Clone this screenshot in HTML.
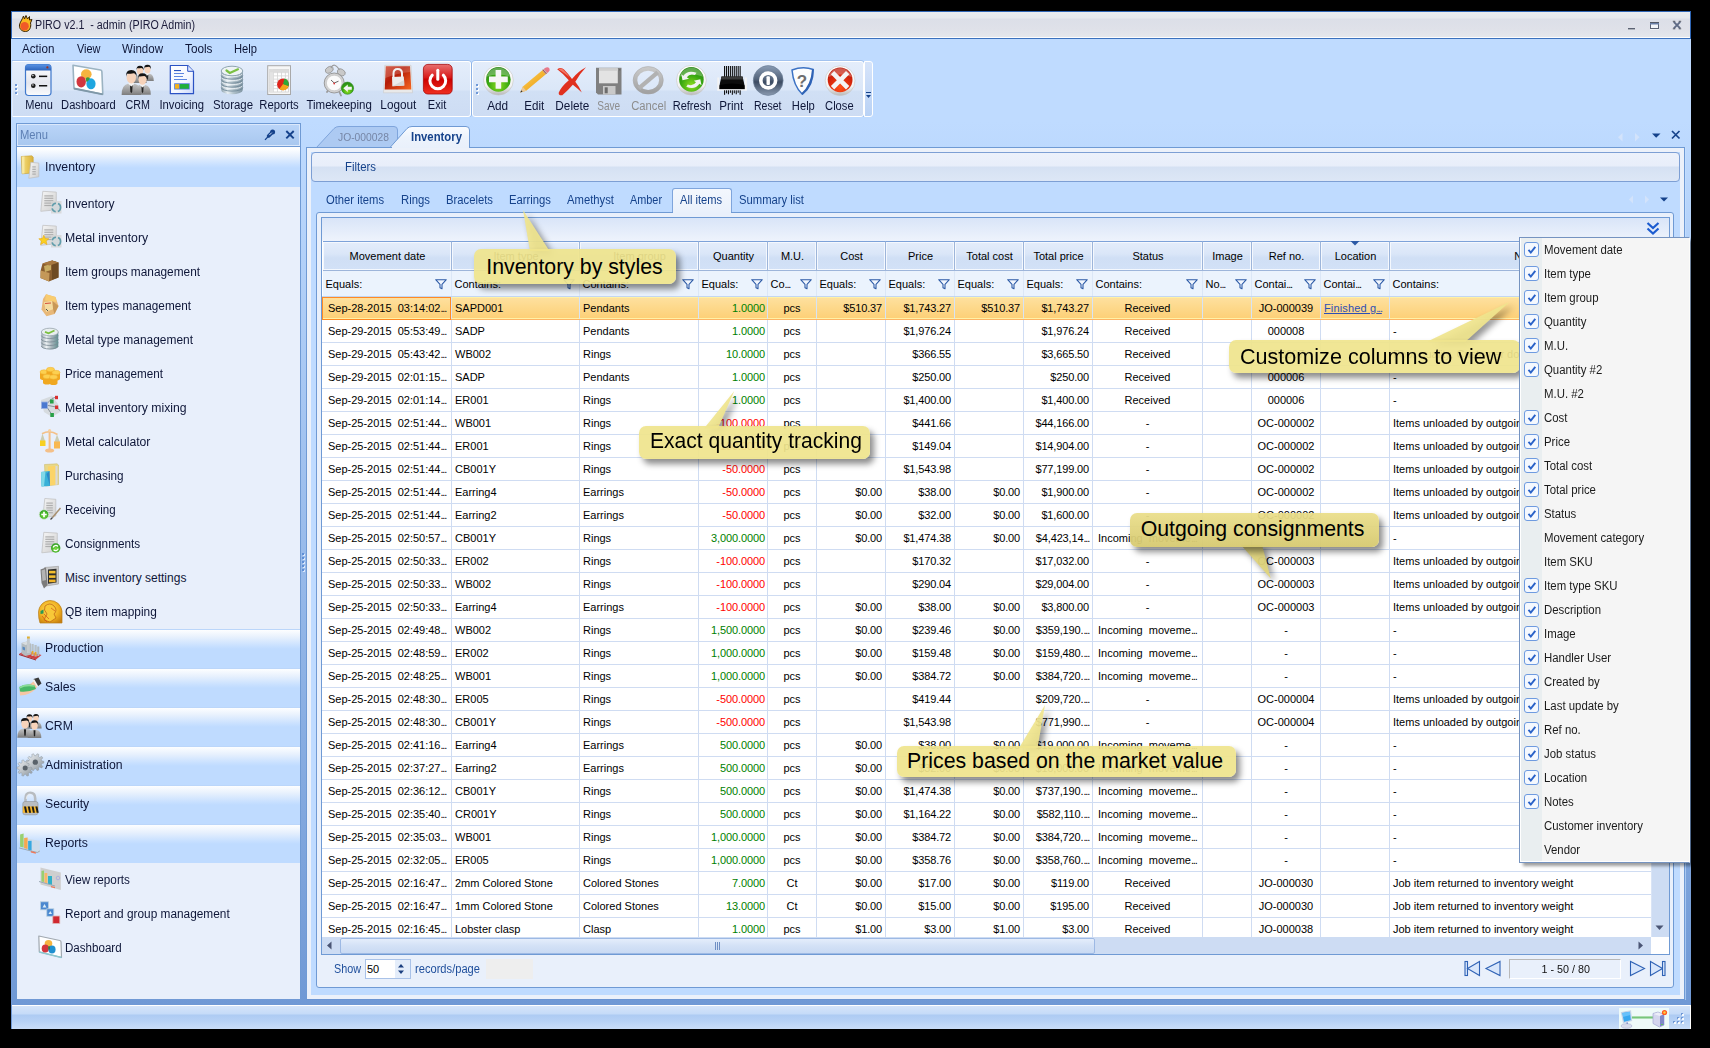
<!DOCTYPE html>
<html><head><meta charset="utf-8"><title>PIRO</title>
<style>
html,body{margin:0;padding:0;background:#000;}
body{width:1710px;height:1048px;position:relative;overflow:hidden;font-family:"Liberation Sans",sans-serif;}
.t{position:absolute;white-space:pre;}
div{box-sizing:border-box;}
svg{position:absolute;overflow:visible;}

.tb{position:absolute;border:1px solid #fff;border-radius:3px;box-shadow:0 -1px 0 #a3c2ee,1px 0 0 #8fb3e6;background:linear-gradient(#e4edfb 0px,#dbe7f8 28px,#d1e0f5 29px,#cddcf3 55px);}
.navh{position:absolute;left:17px;width:283px;height:39px;background:linear-gradient(#bbd6fa 0,#bbd6fa 1px,#fdfeff 1px,#e8f1fd 8px,#c8e0ff 17px,#bfdbff 20px,#bfdbff 39px);}
.hdr{position:absolute;top:241px;height:30px;border-top:1px solid #7da2d9;border-right:1px solid #9db5da;border-bottom:1px solid #9db5da;background:linear-gradient(#e4edfb 0,#dae6f8 12px,#d0dff5 16px,#d2e1f7 28px);box-shadow:inset 1px 1px 0 #f4f8fe,inset -1px -1px 0 #f4f8fe;}
.fc{position:absolute;top:271px;height:25px;border-right:1px solid #dbe7f7;background:#ebf3fd;}
.row{position:absolute;left:322px;width:1329px;height:23px;border-bottom:1px solid #cfdcf2;background:#fff;}
.c{position:absolute;top:0;height:22px;border-right:1px solid #cfdcf2;font-size:11px;line-height:22px;white-space:pre;overflow:hidden;color:#000;}
.g{color:#008000}.r{color:#ff0000}
.co{position:absolute;border-radius:7px;background:rgba(238,227,138,0.93);box-shadow:4px 5px 6px rgba(0,0,0,0.45);}
.cot{position:absolute;white-space:pre;font-size:21.3px;color:#000;line-height:26px;}
.pi{position:absolute;left:24px;font-size:12px;line-height:16px;color:#1b1b1b;white-space:pre;transform-origin:left center;transform:scaleX(0.95);}
.cb{position:absolute;left:4px;width:15px;height:15px;border:1px solid #6e9be0;border-radius:3px;background:#f4f8fe;}

</style></head><body>
<div class="" style="position:absolute;left:11px;top:11px;width:1680px;height:1018px;background:linear-gradient(#bfdbff 0px,#bfdbff 110px,#7099d5 994px,#7099d5 1018px);"></div>
<div class="" style="position:absolute;left:11px;top:11px;width:1680px;height:28px;background:linear-gradient(#2f66b5 0,#2f66b5 1px,#e9edf1 1px,#e6eaee 7px,#dcdfe8 8px,#dfe1e9 18px,#e5e7ec 26px,#fdfdfe 26px,#fdfdfe 27px,#3c72be 27px);border-left:1px solid #2f66b5;border-right:1px solid #2f66b5;"></div>
<span class="t " style="left:35.40px;top:16.84px;font-size:12px;line-height:16px;color:#1b1b3a;transform:scaleX(0.8920);transform-origin:left center;">PIRO v2.1  - admin (PIRO Admin)</span>
<svg style="left:18px;top:15px" width="16" height="18" viewBox="0 0 16 18"><path d="M5.5 1 L6.5 4 L8 0.5 L9.5 4 L11.5 1.5 L11.5 5 L14 4.5 L12.5 8 C13.5 12 11.5 16.5 7.5 16.5 C3.5 16.5 1 13.5 1.5 10 C2 7 4 5 5.5 1Z" fill="#f8b820" stroke="#3a2400" stroke-width="1"/><circle cx="6.6" cy="11.2" r="4.2" fill="#f05a28"/></svg>
<svg style="left:1620px;top:14px" width="70" height="22" viewBox="0 0 70 22"><rect x="8" y="15" width="7" height="1" fill="#fff"/><rect x="8" y="14" width="7" height="1.500" fill="#5b6273"/><rect x="30" y="14.500" width="9" height="1" fill="#fff"/><rect x="30.500" y="8.500" width="8" height="6" fill="#f4f6fa" stroke="#5b6273"/><rect x="30" y="8" width="9" height="2.500" fill="#6a7fa6"/><rect x="30" y="8" width="9" height="1" fill="#555a66"/><path d="M53.800 7.800 L60.200 14.400 M60.200 7.800 L53.800 14.400" stroke="#5f6b86" stroke-width="1.900"/><path d="M52.800 7.300 L55.300 7.300 M58.700 7.300 L61.200 7.300 M52.800 14.800 L55.300 14.800 M58.700 14.800 L61.200 14.800" stroke="#555a66" stroke-width="1"/></svg>
<div class="" style="position:absolute;left:12px;top:39px;width:1678px;height:21px;background:#bfdbff;"></div>
<span class="t " style="left:22.00px;top:40.84px;font-size:12px;line-height:16px;color:#0e1638;transform:scaleX(0.9715);transform-origin:left center;">Action</span>
<span class="t " style="left:76.50px;top:40.84px;font-size:12px;line-height:16px;color:#0e1638;transform:scaleX(0.9111);transform-origin:left center;">View</span>
<span class="t " style="left:122.00px;top:40.84px;font-size:12px;line-height:16px;color:#0e1638;transform:scaleX(0.9607);transform-origin:left center;">Window</span>
<span class="t " style="left:185.00px;top:40.84px;font-size:12px;line-height:16px;color:#0e1638;transform:scaleX(0.9817);transform-origin:left center;">Tools</span>
<span class="t " style="left:234.30px;top:40.84px;font-size:12px;line-height:16px;color:#0e1638;transform:scaleX(0.9320);transform-origin:left center;">Help</span>
<div class="tb" style="left:12px;top:61px;width:459px;height:56px;border-radius:0 3px 3px 0;border-left-color:#e0eafa"></div>
<div class="tb" style="left:472px;top:61px;width:392px;height:56px"></div>
<div style="position:absolute;left:864px;top:61px;width:9px;height:56px;border:1px solid #fff;border-radius:0 3px 3px 0;background:linear-gradient(#d6e4fa,#b9d2f5)"></div>
<svg style="left:865px;top:92px" width="8" height="8" viewBox="0 0 8 8"><rect x="1" y="0" width="5" height="1" fill="#15428b"/><path d="M1 3 L6 3 L3.500 6 Z" fill="#15428b"/></svg>
<svg style="left:12px;top:61px" width="861" height="56" viewBox="12 61 861 56"><defs>
<linearGradient id="gBlueT" x1="0" y1="0" x2="0" y2="1"><stop offset="0" stop-color="#5a93e4"/><stop offset="1" stop-color="#2b63bb"/></linearGradient>
<linearGradient id="gWin" x1="0" y1="0" x2="0" y2="1"><stop offset="0" stop-color="#ffffff"/><stop offset="0.6" stop-color="#e4e6ee"/><stop offset="1" stop-color="#fafbfd"/></linearGradient>
<radialGradient id="gGreen" cx="0.5" cy="0.75" r="0.7"><stop offset="0" stop-color="#8edc20"/><stop offset="0.6" stop-color="#3aa812"/><stop offset="1" stop-color="#2a8a14"/></radialGradient>
<radialGradient id="gRed" cx="0.5" cy="0.8" r="0.75"><stop offset="0" stop-color="#ff5018"/><stop offset="0.6" stop-color="#d8280c"/><stop offset="1" stop-color="#b81808"/></radialGradient>
<linearGradient id="gRim" x1="0" y1="0" x2="0" y2="1"><stop offset="0" stop-color="#ffffff"/><stop offset="0.7" stop-color="#f2f2f2"/><stop offset="1" stop-color="#b8b8b8"/></linearGradient>
<linearGradient id="gSilver" x1="0" y1="0" x2="1" y2="0"><stop offset="0" stop-color="#8ea2ae"/><stop offset="0.3" stop-color="#e8eff3"/><stop offset="0.55" stop-color="#b4c4cd"/><stop offset="1" stop-color="#7e94a2"/></linearGradient>
<linearGradient id="gExit" x1="0" y1="0" x2="0" y2="1"><stop offset="0" stop-color="#e87070"/><stop offset="0.45" stop-color="#d81818"/><stop offset="0.5" stop-color="#cc0000"/><stop offset="1" stop-color="#f03020"/></linearGradient>
<linearGradient id="gLock" x1="0" y1="0" x2="1" y2="1"><stop offset="0" stop-color="#d04028"/><stop offset="0.4" stop-color="#b41c08"/><stop offset="1" stop-color="#f86820"/></linearGradient>
<linearGradient id="gReset" x1="0" y1="0" x2="0" y2="1"><stop offset="0" stop-color="#8a9cb4"/><stop offset="0.45" stop-color="#55657c"/><stop offset="0.55" stop-color="#3c4b62"/><stop offset="1" stop-color="#8a9ab0"/></linearGradient>
<linearGradient id="gDoc" x1="0" y1="0" x2="1" y2="1"><stop offset="0" stop-color="#ffffff"/><stop offset="0.6" stop-color="#f4f7ff"/><stop offset="1" stop-color="#c8d6fa"/></linearGradient>
<linearGradient id="gSuit" x1="0" y1="0" x2="0" y2="1"><stop offset="0" stop-color="#c4c4c4"/><stop offset="1" stop-color="#7c7c7c"/></linearGradient>
<linearGradient id="gGrey" x1="0" y1="0" x2="0" y2="1"><stop offset="0" stop-color="#c8c8c8"/><stop offset="1" stop-color="#a2a2a2"/></linearGradient>
<linearGradient id="gPencil" x1="0" y1="0" x2="1" y2="1"><stop offset="0" stop-color="#ffd45a"/><stop offset="1" stop-color="#e8960c"/></linearGradient>
</defs><rect x="25.500" y="64.500" width="25.500" height="31" rx="3.200" fill="url(#gWin)" stroke="#3f78cc" stroke-width="1.200"/><path d="M25.500 70.500 L25.500 67.700 Q25.500 64.500 28.700 64.500 L47.800 64.500 Q51 64.500 51 67.700 L51 70.500 Z" fill="url(#gBlueT)"/><circle cx="47.400" cy="67.400" r="1.100" fill="#a03020"/><circle cx="33.300" cy="76.300" r="2.300" fill="#1a1a1a"/><circle cx="33.300" cy="85.700" r="2.300" fill="#1a1a1a"/><circle cx="32.900" cy="75.600" r="0.800" fill="#ddd"/><circle cx="32.900" cy="85" r="0.800" fill="#ddd"/><rect x="39" y="75.600" width="8.200" height="1.500" fill="#111"/><rect x="39" y="85" width="8.200" height="1.500" fill="#111"/><path d="M73 65.200 L100.500 70 Q101.800 70.300 101.900 71.800 L102.800 94.300 L74 88.500 Z" fill="#fff" stroke="#9bb3c2" stroke-width="1.600" stroke-linejoin="round"/><path d="M74 88.500 L102.800 94.300" stroke="#7f98a8" stroke-width="1.800"/><ellipse cx="86.300" cy="74.300" rx="5.300" ry="5" fill="#f6b440"/><ellipse cx="81.200" cy="81.800" rx="4.700" ry="5.600" fill="#d2363e"/><ellipse cx="91" cy="83.800" rx="4.600" ry="5.500" fill="#1ea6e0"/><path d="M86 78 Q88 76.500 90 78.500 Q88.500 81 86.500 82 Q85.500 80 86 78Z" fill="#3b9a40"/><g transform="translate(140,65.8) scale(0.78)"><path d="M-8.500 22 Q-8.500 13 -3 12 L3 12 Q8.500 13 8.500 22 Z" fill="url(#gSuit)"/><path d="M-1.200 12.500 L1.200 12.500 L0.800 19 L0 20.500 L-0.800 19Z" fill="#222"/><path d="M-2.800 12 L0 14.500 L2.800 12 L1.500 11 L-1.500 11Z" fill="#f2f2f2"/><ellipse cx="0" cy="6.500" rx="4.100" ry="5.300" fill="#f7d3ba"/><path d="M-4.500 6 Q-5.200 0 0 0 Q5.200 0 4.600 6 Q4 3 2 2.800 Q-2 3.500 -3.800 3.200 Q-4.300 4.500 -4.500 6Z" fill="#141414"/></g><g transform="translate(147.5,64.8) scale(0.74)"><path d="M-8.500 22 Q-8.500 13 -3 12 L3 12 Q8.500 13 8.500 22 Z" fill="url(#gSuit)"/><path d="M-1.200 12.500 L1.200 12.500 L0.800 19 L0 20.500 L-0.800 19Z" fill="#222"/><path d="M-2.800 12 L0 14.500 L2.800 12 L1.500 11 L-1.500 11Z" fill="#f2f2f2"/><ellipse cx="0" cy="6.500" rx="4.100" ry="5.300" fill="#f7d3ba"/><path d="M-4.500 6 Q-5.200 0 0 0 Q5.200 0 4.600 6 Q4 3 2 2.800 Q-2 3.500 -3.800 3.200 Q-4.300 4.500 -4.500 6Z" fill="#141414"/></g><g transform="translate(131.3,70) scale(1.14)"><path d="M-8.500 22 Q-8.500 13 -3 12 L3 12 Q8.500 13 8.500 22 Z" fill="url(#gSuit)"/><path d="M-1.200 12.500 L1.200 12.500 L0.800 19 L0 20.500 L-0.800 19Z" fill="#222"/><path d="M-2.800 12 L0 14.500 L2.800 12 L1.500 11 L-1.500 11Z" fill="#f2f2f2"/><ellipse cx="0" cy="6.500" rx="4.100" ry="5.300" fill="#f7d3ba"/><path d="M-4.500 6 Q-5.200 0 0 0 Q5.200 0 4.600 6 Q4 3 2 2.800 Q-2 3.500 -3.800 3.200 Q-4.300 4.500 -4.500 6Z" fill="#141414"/></g><g transform="translate(142.5,73.2) scale(0.98)"><path d="M-8.500 22 Q-8.500 13 -3 12 L3 12 Q8.500 13 8.500 22 Z" fill="url(#gSuit)"/><path d="M-1.200 12.500 L1.200 12.500 L0.800 19 L0 20.500 L-0.800 19Z" fill="#222"/><path d="M-2.800 12 L0 14.500 L2.800 12 L1.500 11 L-1.500 11Z" fill="#f2f2f2"/><ellipse cx="0" cy="6.500" rx="4.100" ry="5.300" fill="#f7d3ba"/><path d="M-4.500 6 Q-5.200 0 0 0 Q5.200 0 4.600 6 Q4 3 2 2.800 Q-2 3.500 -3.800 3.200 Q-4.300 4.500 -4.500 6Z" fill="#141414"/></g><path d="M170.300 65.500 L187.700 65.500 L193.500 71.300 L193.500 93.700 L170.300 93.700 Z" fill="url(#gDoc)" stroke="#2b52c4" stroke-width="1.200" stroke-linejoin="round"/><path d="M187.700 65.500 L187.700 71.300 L193.500 71.300" fill="#dfe8ff" stroke="#2b52c4" stroke-width="1"/><rect x="174" y="70" width="7" height="1.100" fill="#2c55c0"/><rect x="174" y="73" width="10" height="1" fill="#5e86e0"/><rect x="174" y="76" width="9" height="1" fill="#5e86e0"/><rect x="174" y="79" width="13" height="1" fill="#5e86e0"/><rect x="174.200" y="83.300" width="15.500" height="6.200" fill="#4a78d8"/><rect x="175" y="84.100" width="4.200" height="4.600" fill="#f6b21c"/><rect x="180" y="84.100" width="8.900" height="4.600" fill="#1fb038"/><path d="M221.200 71 L221.200 90 A10.800 4.300 0 0 0 242.800 90 L242.800 71 Z" fill="url(#gSilver)"/><path d="M221.200 75.5 A10.800 3.600 0 0 0 242.800 75.5" fill="none" stroke="#6f8796" stroke-width="1" opacity="0.850"/><path d="M222 74.3 A10.500 3.400 0 0 0 242 74.3" fill="none" stroke="#f4f8fa" stroke-width="0.900" opacity="0.900"/><path d="M221.200 79.5 A10.800 3.600 0 0 0 242.800 79.5" fill="none" stroke="#6f8796" stroke-width="1" opacity="0.850"/><path d="M222 78.3 A10.500 3.400 0 0 0 242 78.3" fill="none" stroke="#f4f8fa" stroke-width="0.900" opacity="0.900"/><path d="M221.200 83.5 A10.800 3.600 0 0 0 242.800 83.5" fill="none" stroke="#6f8796" stroke-width="1" opacity="0.850"/><path d="M222 82.3 A10.500 3.400 0 0 0 242 82.3" fill="none" stroke="#f4f8fa" stroke-width="0.900" opacity="0.900"/><path d="M221.200 87.5 A10.800 3.600 0 0 0 242.800 87.5" fill="none" stroke="#6f8796" stroke-width="1" opacity="0.850"/><path d="M222 86.3 A10.500 3.400 0 0 0 242 86.3" fill="none" stroke="#f4f8fa" stroke-width="0.900" opacity="0.900"/><ellipse cx="232" cy="71" rx="10.800" ry="4.800" fill="#eef3f5" stroke="#8fa5b1" stroke-width="1"/><path d="M226.500 70.500 L229.800 73 L238 69.300" fill="none" stroke="#7bc043" stroke-width="2.200" stroke-linecap="round"/><rect x="267.700" y="65.700" width="22.800" height="28.800" fill="#f6f6f6" stroke="#a9a9a9" stroke-width="1"/><rect x="269.700" y="69.500" width="18.800" height="22.500" fill="#fff" stroke="#cfcfcf" stroke-width="0.800"/><rect x="269.700" y="72.3" width="18.800" height="0.800" fill="#d4d4d4"/><rect x="269.700" y="75.5" width="18.800" height="0.800" fill="#d4d4d4"/><rect x="269.700" y="78.7" width="18.800" height="0.800" fill="#d4d4d4"/><rect x="269.700" y="81.9" width="18.800" height="0.800" fill="#d4d4d4"/><rect x="269.700" y="85.1" width="18.800" height="0.800" fill="#d4d4d4"/><rect x="269.700" y="88.3" width="18.800" height="0.800" fill="#d4d4d4"/><rect x="273.2" y="69.500" width="0.800" height="22.500" fill="#d4d4d4"/><rect x="277.1" y="69.500" width="0.800" height="22.500" fill="#d4d4d4"/><rect x="281.0" y="69.500" width="0.800" height="22.500" fill="#d4d4d4"/><rect x="284.9" y="69.500" width="0.800" height="22.500" fill="#d4d4d4"/><rect x="269.700" y="69.500" width="3.700" height="22.500" fill="#e4e4e4"/><rect x="269.700" y="69.500" width="18.800" height="2.700" fill="#dcdcdc"/><circle cx="283" cy="84.300" r="5.900" fill="#e0241a"/><path d="M283 84.300 L284.500 78.600 A5.900 5.900 0 0 1 288.500 86.300 Z" fill="#2ea83a"/><path d="M283 84.300 L288.500 86.300 A5.900 5.900 0 0 1 279.500 89 Z" fill="#f6c020"/><path d="M283 84.300 L279.500 89 A5.900 5.900 0 0 0 288 87.500Z" fill="#f08a18" opacity="0.500"/><ellipse cx="329.300" cy="69.800" rx="4.200" ry="3" transform="rotate(-30 329.300 69.800)" fill="#c9c9c9" stroke="#8d8d8d" stroke-width="0.700"/><ellipse cx="341.300" cy="72.300" rx="4.200" ry="3" transform="rotate(30 341.300 72.300)" fill="#c9c9c9" stroke="#8d8d8d" stroke-width="0.700"/><path d="M331 68 Q334 61.500 339.500 70" fill="none" stroke="#9c9c9c" stroke-width="1.200"/><path d="M327 92 L329.500 88 M341 95.500 L339 91" stroke="#9a9a9a" stroke-width="1.800" stroke-linecap="round"/><circle cx="334.200" cy="83" r="10" fill="#d2d2d2" stroke="#9a9a9a" stroke-width="1"/><circle cx="334.200" cy="83" r="7.800" fill="#fbfbfb" stroke="#bdbdbd" stroke-width="0.600"/><path d="M334.200 83 L331 80 M334.200 83 L338.500 81.200" stroke="#555" stroke-width="0.900"/><circle cx="334.200" cy="83.500" r="0.900" fill="#d33"/><circle cx="347.500" cy="88.200" r="6.100" fill="url(#gGreen)" stroke="#2c8a18" stroke-width="0.600"/><path d="M343.300 88.200 L347.800 84.500 L347.800 86.700 L351.800 86.700 L351.800 89.800 L347.800 89.800 L347.800 91.900Z" fill="#f4f4f4"/><path d="M384.800 65.300 L411 65.300 L412.600 92.800 L383.500 92.800 Z" fill="#e9e9e9" stroke="#c9c9c9" stroke-width="0.600"/><path d="M385.800 66.200 L410 66.200 L411.300 89.500 L384.700 89.500 Z" fill="url(#gLock)"/><path d="M385.800 66.200 L410 66.200 L410.300 72 Q398 73 385.300 78Z" fill="#fff" opacity="0.180"/><path d="M393.500 77 L393.500 73.500 Q393.500 69 397.700 69 Q402 69 402 73.500 L402 77" fill="none" stroke="#f1f1f1" stroke-width="2"/><path d="M392 77 L403.800 76.500 L404.300 85.500 L392.300 86.200Z" fill="#ececec"/><path d="M392.300 86.200 L404.300 85.500 L404.100 80 Z" fill="#d8d8d8"/><rect x="423.400" y="64.400" width="28.800" height="29.600" rx="4.500" fill="url(#gExit)" stroke="#a80808" stroke-width="0.800"/><path d="M432.300 75.200 A7.900 7.900 0 1 0 443.300 75.200" fill="none" stroke="#fff" stroke-width="3" stroke-linecap="round"/><path d="M437.800 70.200 L437.800 79.200" stroke="#fff" stroke-width="3" stroke-linecap="round"/><circle cx="498.400" cy="80.200" r="14.900" fill="url(#gRim)" stroke="#c4c4c4" stroke-width="0.600"/><circle cx="498.400" cy="79.400" r="12.300" fill="url(#gGreen)"/><path d="M486.500 76.800 A12.300 12.300 0 0 1 510.300 76.800 Q498.400 72 486.500 76.800Z" fill="#fff" opacity="0.280"/><path d="M495.600 70 L501.200 70 L501.200 76.600 L507.800 76.600 L507.800 82.200 L501.200 82.200 L501.200 88.800 L495.600 88.800 L495.600 82.200 L489 82.200 L489 76.600 L495.600 76.600Z" fill="#f6f6f6"/><path d="M520.300 92.500 L522.700 86.800 L543.500 69.200 L547 73.200 L526.200 90.800 Z" fill="url(#gPencil)"/><path d="M520.300 92.500 L522.700 86.800 L526.200 90.800Z" fill="#e8c79a"/><path d="M520.300 92.500 L521.300 90.200 L522.600 91.700Z" fill="#333"/><path d="M543.500 69.200 L545 67.900 Q547.800 66.300 549.300 68.200 Q550.600 70.200 548.500 71.900 L547 73.200Z" fill="#e8788a"/><path d="M542.200 70.300 L543.800 68.900 L547.300 72.900 L545.700 74.300Z" fill="#b9b9b9"/><path d="M542.800 69.800 L546.300 73.800" stroke="#a82030" stroke-width="0.800"/><path d="M557.200 69.300 Q561 66.500 564 69.500 Q568.500 74 572 79 Q578 71.500 586 67.300 Q580 73.500 575.300 81.800 Q579.800 87.500 581.800 92.500 Q577 88 572.800 84.800 Q568 90.500 562.300 95.300 Q558.500 95.800 558.700 92.800 Q561 87 568.800 80.300 Q563 73.500 557.200 69.300Z" fill="#e0301e"/><path d="M558.500 69.300 Q561 67.500 563.500 70 Q567 73.500 570 77.500 Q565 73.500 558.500 69.300Z" fill="#f58a78" opacity="0.800"/><path d="M596 67.800 L621.500 67.800 L621.500 94.500 L598 94.500 L596 92.500 Z" fill="#808080"/><rect x="599" y="68.300" width="18.800" height="15" fill="#e3e3e3"/><rect x="599" y="68.300" width="18.800" height="2.500" fill="#cfcfcf"/><rect x="603" y="86" width="12.500" height="8.500" fill="#c9c9c9"/><rect x="604.700" y="87.300" width="3" height="6" fill="#6c6c6c"/><rect x="619" y="69" width="1.500" height="1.500" fill="#6a6a6a"/><ellipse cx="648.200" cy="80.300" rx="13" ry="11.700" fill="none" stroke="url(#gGrey)" stroke-width="4.200"/><path d="M638.800 88.300 L657.700 72.300" stroke="#b2b2b2" stroke-width="4.200"/><ellipse cx="648.200" cy="80.300" rx="15.100" ry="13.800" fill="none" stroke="#a4a4a4" stroke-width="0.500"/><circle cx="691.400" cy="80.200" r="14.900" fill="url(#gRim)" stroke="#c4c4c4" stroke-width="0.600"/><circle cx="691.400" cy="79.400" r="12.300" fill="url(#gGreen)"/><path d="M679.500 76.800 A12.300 12.300 0 0 1 703.300 76.800 Q691.400 72 679.500 76.800Z" fill="#fff" opacity="0.250"/><path d="M683.300 75.800 Q688 69.500 696.500 72.800 L695 75 Q689.500 73.300 686.800 77.300 L689 78.800 L682.500 80.300 L681.300 74.300 Z" fill="#f2f2f2"/><path d="M699.500 83.800 Q694.800 90.300 686.300 86.800 L687.800 84.600 Q693.300 86.500 696 82.300 L693.800 80.800 L700.300 79.300 L701.500 85.300 Z" fill="#f2f2f2"/><rect x="724.00" y="66" width="1.100" height="11" fill="#111"/><rect x="725.95" y="66" width="1.100" height="11" fill="#111"/><rect x="727.90" y="66" width="1.100" height="11" fill="#111"/><rect x="729.85" y="66" width="1.100" height="11" fill="#111"/><rect x="731.80" y="66" width="1.100" height="11" fill="#111"/><rect x="733.75" y="66" width="1.100" height="11" fill="#111"/><rect x="735.70" y="66" width="1.100" height="11" fill="#111"/><rect x="737.65" y="66" width="1.100" height="11" fill="#111"/><rect x="739.60" y="66" width="1.100" height="11" fill="#111"/><path d="M721.500 76.500 L742.500 76.500 L745.500 89.300 L718.500 89.300 Z" fill="#0c0c0c"/><path d="M721.500 76.500 L742.500 76.500 L743.200 79.500 L720.800 79.500Z" fill="#3a3a3a"/><path d="M719.500 85 Q732 82 744.500 85 L745.500 89.300 L718.500 89.300Z" fill="#000"/><rect x="717.300" y="77.500" width="2" height="12.800" fill="#f3f3f3"/><rect x="744.800" y="77.500" width="2" height="12.800" fill="#f3f3f3"/><rect x="717.300" y="89.300" width="29.500" height="1.300" fill="#f6f6f6"/><rect x="724.00" y="90.300" width="1.100" height="4.5" fill="#111"/><rect x="725.95" y="90.300" width="1.100" height="3" fill="#111"/><rect x="727.90" y="90.300" width="1.100" height="4" fill="#111"/><rect x="729.85" y="90.300" width="1.100" height="2.5" fill="#111"/><rect x="731.80" y="90.300" width="1.100" height="4.5" fill="#111"/><rect x="733.75" y="90.300" width="1.100" height="3" fill="#111"/><rect x="735.70" y="90.300" width="1.100" height="4" fill="#111"/><rect x="737.65" y="90.300" width="1.100" height="2.5" fill="#111"/><rect x="739.60" y="90.300" width="1.100" height="4.5" fill="#111"/><circle cx="768.200" cy="80.500" r="14.900" fill="url(#gReset)" stroke="#6d7f98" stroke-width="0.700"/><circle cx="768.200" cy="80.500" r="7.400" fill="none" stroke="#fff" stroke-width="3.600"/><rect x="766.500" y="76.300" width="3.400" height="8.600" rx="1" fill="#fff"/><path d="M792 70 Q803 65.800 813.300 69.500 Q813.300 86 802.300 94.300 Q793.500 86 792 70Z" fill="#fdfdfd" stroke="#3c72c4" stroke-width="1.500" stroke-linejoin="round"/><path d="M812 69.200 L813.500 69.700 Q813.800 86 802.500 94.600 L801.200 93.500 Q811 85 812 69.200Z" fill="#2f62b4"/><text x="802" y="87" font-family="Liberation Sans" font-weight="bold" font-size="17" text-anchor="middle" fill="#6e6e6e">?</text><circle cx="840.100" cy="80.700" r="14.900" fill="url(#gRim)" stroke="#c4c4c4" stroke-width="0.600"/><circle cx="840.100" cy="79.800" r="12.400" fill="url(#gRed)"/><path d="M828.200 77 A12.400 12.400 0 0 1 852 77 Q840.100 72 828.200 77Z" fill="#fff" opacity="0.280"/><path d="M834.200 71 L840.100 76.900 L846 71 L849.300 74.300 L843.400 80.200 L849.300 86.100 L846 89.400 L840.100 83.500 L834.200 89.400 L830.900 86.100 L836.800 80.200 L830.900 74.300Z" fill="#f4f4f4"/></svg>
<div class="" style="position:absolute;left:15px;top:84px;width:2px;height:2px;background:#6f98d6;box-shadow:1px 1px 0 #fff;"></div>
<div class="" style="position:absolute;left:15px;top:88px;width:2px;height:2px;background:#6f98d6;box-shadow:1px 1px 0 #fff;"></div>
<div class="" style="position:absolute;left:15px;top:92px;width:2px;height:2px;background:#6f98d6;box-shadow:1px 1px 0 #fff;"></div>
<div class="" style="position:absolute;left:476px;top:84px;width:2px;height:2px;background:#6f98d6;box-shadow:1px 1px 0 #fff;"></div>
<div class="" style="position:absolute;left:476px;top:88px;width:2px;height:2px;background:#6f98d6;box-shadow:1px 1px 0 #fff;"></div>
<div class="" style="position:absolute;left:476px;top:92px;width:2px;height:2px;background:#6f98d6;box-shadow:1px 1px 0 #fff;"></div>
<span class="t " style="left:23.89px;top:97.44px;font-size:12px;line-height:16px;color:#0e1638;transform:scaleX(0.9162);transform-origin:center center;">Menu</span>
<span class="t " style="left:59.05px;top:97.44px;font-size:12px;line-height:16px;color:#0e1638;transform:scaleX(0.9284);transform-origin:center center;">Dashboard</span>
<span class="t " style="left:123.74px;top:97.44px;font-size:12px;line-height:16px;color:#0e1638;transform:scaleX(0.8965);transform-origin:center center;">CRM</span>
<span class="t " style="left:158.32px;top:97.44px;font-size:12px;line-height:16px;color:#0e1638;transform:scaleX(0.9396);transform-origin:center center;">Invoicing</span>
<span class="t " style="left:211.59px;top:97.44px;font-size:12px;line-height:16px;color:#0e1638;transform:scaleX(0.9518);transform-origin:center center;">Storage</span>
<span class="t " style="left:258.49px;top:97.44px;font-size:12px;line-height:16px;color:#0e1638;transform:scaleX(0.9401);transform-origin:center center;">Reports</span>
<span class="t " style="left:305.37px;top:97.44px;font-size:12px;line-height:16px;color:#0e1638;transform:scaleX(0.9597);transform-origin:center center;">Timekeeping</span>
<span class="t " style="left:379.55px;top:97.44px;font-size:12px;line-height:16px;color:#0e1638;transform:scaleX(0.9809);transform-origin:center center;">Logout</span>
<span class="t " style="left:427.40px;top:97.44px;font-size:12px;line-height:16px;color:#0e1638;transform:scaleX(0.9248);transform-origin:center center;">Exit</span>
<span class="t " style="left:487.22px;top:98.44px;font-size:12px;line-height:16px;color:#0e1638;transform:scaleX(0.9836);transform-origin:center center;">Add</span>
<span class="t " style="left:523.86px;top:98.44px;font-size:12px;line-height:16px;color:#0e1638;transform:scaleX(0.9672);transform-origin:center center;">Edit</span>
<span class="t " style="left:554.76px;top:98.44px;font-size:12px;line-height:16px;color:#0e1638;transform:scaleX(0.9802);transform-origin:center center;">Delete</span>
<span class="t " style="left:595.22px;top:98.44px;font-size:12px;line-height:16px;color:#8d8d8d;transform:scaleX(0.8409);transform-origin:center center;">Save</span>
<span class="t " style="left:629.72px;top:98.44px;font-size:12px;line-height:16px;color:#8d8d8d;transform:scaleX(0.9370);transform-origin:center center;">Cancel</span>
<span class="t " style="left:670.59px;top:98.44px;font-size:12px;line-height:16px;color:#0e1638;transform:scaleX(0.9163);transform-origin:center center;">Refresh</span>
<span class="t " style="left:718.66px;top:98.44px;font-size:12px;line-height:16px;color:#0e1638;transform:scaleX(0.9727);transform-origin:center center;">Print</span>
<span class="t " style="left:751.73px;top:98.44px;font-size:12px;line-height:16px;color:#0e1638;transform:scaleX(0.8773);transform-origin:center center;">Reset</span>
<span class="t " style="left:790.86px;top:98.44px;font-size:12px;line-height:16px;color:#0e1638;transform:scaleX(0.9320);transform-origin:center center;">Help</span>
<span class="t " style="left:824.16px;top:98.44px;font-size:12px;line-height:16px;color:#0e1638;transform:scaleX(0.9290);transform-origin:center center;">Close</span>
<div class="" style="position:absolute;left:16px;top:123px;width:285px;height:876px;border:1px solid #6f9ad4;border-bottom:none;background:#e8effb;"></div>
<div class="" style="position:absolute;left:17px;top:124px;width:283px;height:22px;background:linear-gradient(#b9d4f8,#a9c8ef);border:1px solid #dbe8fb;"></div>
<div class="" style="position:absolute;left:17px;top:146px;width:283px;height:1px;background:#6f9ad4;"></div>
<span class="t " style="left:19.50px;top:127.34px;font-size:12px;line-height:16px;color:#5d7fb4;transform:scaleX(0.9329);transform-origin:left center;">Menu</span>
<svg style="left:262px;top:127px" width="36" height="16" viewBox="262 127 36 16"><path d="M271.300 133.200 L268.600 135.900" stroke="#15428b" stroke-width="3.600" stroke-linecap="round"/><circle cx="272.600" cy="131.900" r="2.500" fill="#15428b"/><path d="M271.800 132.600 L269.300 135.100" stroke="#dfeafc" stroke-width="0.900"/><path d="M268.200 136.500 L265 139.900" stroke="#15428b" stroke-width="1.200"/><path d="M286.300 131 L293.700 138.400 M293.700 131 L286.300 138.400" stroke="#15428b" stroke-width="1.900"/></svg>
<div class="" style="position:absolute;left:17px;top:147px;width:283px;height:2px;background:#fdfeff;z-index:1;"></div>
<div class="navh" style="top:148px"></div>
<span class="t " style="left:45.20px;top:159.14px;font-size:12px;line-height:16px;color:#0e1638;transform:scaleX(1.0200);transform-origin:left center;">Inventory</span>
<div class="navh" style="top:629px"></div>
<span class="t " style="left:45.20px;top:640.14px;font-size:12px;line-height:16px;color:#0e1638;transform:scaleX(1.0200);transform-origin:left center;">Production</span>
<div class="navh" style="top:668px"></div>
<span class="t " style="left:45.20px;top:679.14px;font-size:12px;line-height:16px;color:#0e1638;transform:scaleX(1.0200);transform-origin:left center;">Sales</span>
<div class="navh" style="top:707px"></div>
<span class="t " style="left:45.20px;top:718.14px;font-size:12px;line-height:16px;color:#0e1638;transform:scaleX(1.0200);transform-origin:left center;">CRM</span>
<div class="navh" style="top:746px"></div>
<span class="t " style="left:45.20px;top:757.14px;font-size:12px;line-height:16px;color:#0e1638;transform:scaleX(1.0200);transform-origin:left center;">Administration</span>
<div class="navh" style="top:785px"></div>
<span class="t " style="left:45.20px;top:796.14px;font-size:12px;line-height:16px;color:#0e1638;transform:scaleX(1.0200);transform-origin:left center;">Security</span>
<div class="navh" style="top:824px"></div>
<span class="t " style="left:45.20px;top:835.14px;font-size:12px;line-height:16px;color:#0e1638;transform:scaleX(1.0200);transform-origin:left center;">Reports</span>
<span class="t " style="left:65.00px;top:195.84px;font-size:12px;line-height:16px;color:#0e1638;transform:scaleX(1.0050);transform-origin:left center;">Inventory</span>
<span class="t " style="left:65.00px;top:229.84px;font-size:12px;line-height:16px;color:#0e1638;transform:scaleX(1.0213);transform-origin:left center;">Metal inventory</span>
<span class="t " style="left:65.00px;top:263.84px;font-size:12px;line-height:16px;color:#0e1638;transform:scaleX(0.9874);transform-origin:left center;">Item groups management</span>
<span class="t " style="left:65.00px;top:297.84px;font-size:12px;line-height:16px;color:#0e1638;transform:scaleX(0.9789);transform-origin:left center;">Item types management</span>
<span class="t " style="left:65.00px;top:331.84px;font-size:12px;line-height:16px;color:#0e1638;transform:scaleX(0.9944);transform-origin:left center;">Metal type management</span>
<span class="t " style="left:65.00px;top:365.84px;font-size:12px;line-height:16px;color:#0e1638;transform:scaleX(0.9731);transform-origin:left center;">Price management</span>
<span class="t " style="left:65.00px;top:399.84px;font-size:12px;line-height:16px;color:#0e1638;transform:scaleX(1.0187);transform-origin:left center;">Metal inventory mixing</span>
<span class="t " style="left:65.00px;top:433.84px;font-size:12px;line-height:16px;color:#0e1638;transform:scaleX(1.0163);transform-origin:left center;">Metal calculator</span>
<span class="t " style="left:65.00px;top:467.84px;font-size:12px;line-height:16px;color:#0e1638;transform:scaleX(0.9761);transform-origin:left center;">Purchasing</span>
<span class="t " style="left:65.00px;top:501.84px;font-size:12px;line-height:16px;color:#0e1638;transform:scaleX(0.9603);transform-origin:left center;">Receiving</span>
<span class="t " style="left:65.00px;top:535.84px;font-size:12px;line-height:16px;color:#0e1638;transform:scaleX(0.9804);transform-origin:left center;">Consignments</span>
<span class="t " style="left:65.00px;top:569.84px;font-size:12px;line-height:16px;color:#0e1638;">Misc inventory settings</span>
<span class="t " style="left:65.00px;top:603.84px;font-size:12px;line-height:16px;color:#0e1638;transform:scaleX(0.9903);transform-origin:left center;">QB item mapping</span>
<span class="t " style="left:65.00px;top:871.84px;font-size:12px;line-height:16px;color:#0e1638;transform:scaleX(0.9764);transform-origin:left center;">View reports</span>
<span class="t " style="left:65.00px;top:905.84px;font-size:12px;line-height:16px;color:#0e1638;transform:scaleX(0.9876);transform-origin:left center;">Report and group management</span>
<span class="t " style="left:65.00px;top:939.84px;font-size:12px;line-height:16px;color:#0e1638;transform:scaleX(0.9642);transform-origin:left center;">Dashboard</span>
<svg style="left:17px;top:147px" width="60" height="850" viewBox="17 147 60 850"><defs>
<linearGradient id="nFold" x1="0" y1="0" x2="1" y2="0"><stop offset="0" stop-color="#f4e08a"/><stop offset="0.5" stop-color="#e8c85a"/><stop offset="1" stop-color="#d8b040"/></linearGradient>
<linearGradient id="nDoc" x1="0" y1="0" x2="1" y2="1"><stop offset="0" stop-color="#f6f6f6"/><stop offset="1" stop-color="#cfcfcf"/></linearGradient>
<linearGradient id="nSil" x1="0" y1="0" x2="1" y2="0"><stop offset="0" stop-color="#9aa6ae"/><stop offset="0.3" stop-color="#eef2f4"/><stop offset="0.6" stop-color="#a9b6bd"/><stop offset="1" stop-color="#5f8f90"/></linearGradient>
<radialGradient id="nGr" cx="0.5" cy="0.6" r="0.6"><stop offset="0" stop-color="#7fe040"/><stop offset="1" stop-color="#2a9a20"/></radialGradient>
<radialGradient id="nGold" cx="0.45" cy="0.4" r="0.7"><stop offset="0" stop-color="#ffe060"/><stop offset="0.6" stop-color="#f0b020"/><stop offset="1" stop-color="#c88010"/></radialGradient>
<linearGradient id="nSuit" x1="0" y1="0" x2="0" y2="1"><stop offset="0" stop-color="#c4c4c4"/><stop offset="1" stop-color="#7c7c7c"/></linearGradient>
<linearGradient id="nGear" x1="0" y1="0" x2="1" y2="1"><stop offset="0" stop-color="#f0f2f4"/><stop offset="1" stop-color="#8a949c"/></linearGradient>
</defs><path d="M21.300 156.500 L31.800 155.800 L33.200 157 L33.200 173 L22 173.800 Z" fill="url(#nFold)" stroke="#c8a030" stroke-width="0.600"/><path d="M22 156.500 L24.500 156.300 L24.500 173.500 L22 173.800Z" fill="#fbf0b0" opacity="0.700"/><path d="M30.8 162.3 L38.8 163.10000000000002 L38.8 176.8 L28.8 178.3 Z" fill="url(#nDoc)" stroke="#bdbdbd" stroke-width="0.700"/><rect x="32.3" y="166.3" width="3.5" height="1.200" fill="#a4a4a4" opacity="0.850"/><rect x="32.3" y="168.7" width="3.5" height="1.200" fill="#a4a4a4" opacity="0.850"/><rect x="32.3" y="171.1" width="3.5" height="1.200" fill="#a4a4a4" opacity="0.850"/><rect x="32.3" y="173.5" width="3.5" height="1.200" fill="#a4a4a4" opacity="0.850"/><path d="M42.8 191.3 L56.3 192.10000000000002 L56.3 209.8 L40.8 211.3 Z" fill="url(#nDoc)" stroke="#bdbdbd" stroke-width="0.700"/><rect x="44.3" y="195.3" width="9.0" height="1.200" fill="#a4a4a4" opacity="0.850"/><rect x="44.3" y="197.7" width="9.0" height="1.200" fill="#a4a4a4" opacity="0.850"/><rect x="44.3" y="200.1" width="9.0" height="1.200" fill="#a4a4a4" opacity="0.850"/><rect x="44.3" y="202.5" width="9.0" height="1.200" fill="#a4a4a4" opacity="0.850"/><rect x="44.3" y="204.9" width="9.0" height="1.200" fill="#a4a4a4" opacity="0.850"/><rect x="51" y="201" width="10.500" height="12.500" fill="#d4d4d4" opacity="0.800"/><circle cx="56.3" cy="207.5" r="4.3" fill="#d2d8db" stroke="#5f9cab" stroke-width="1.600" stroke-dasharray="5 2.200"/><path d="M42.8 225.3 L56.3 226.10000000000002 L56.3 243.8 L40.8 245.3 Z" fill="url(#nDoc)" stroke="#bdbdbd" stroke-width="0.700"/><rect x="44.3" y="229.3" width="9.0" height="1.200" fill="#a4a4a4" opacity="0.850"/><rect x="44.3" y="231.7" width="9.0" height="1.200" fill="#a4a4a4" opacity="0.850"/><rect x="44.3" y="234.1" width="9.0" height="1.200" fill="#a4a4a4" opacity="0.850"/><rect x="44.3" y="236.5" width="9.0" height="1.200" fill="#a4a4a4" opacity="0.850"/><rect x="44.3" y="238.9" width="9.0" height="1.200" fill="#a4a4a4" opacity="0.850"/><rect x="51" y="235" width="10.500" height="12.500" fill="#d4d4d4" opacity="0.800"/><circle cx="56.3" cy="241.5" r="4.3" fill="#d2d8db" stroke="#5f9cab" stroke-width="1.600" stroke-dasharray="5 2.200"/><path d="M43.800 235.200 L45.200 238.500 L48.800 238.800 L46.100 241.100 L47 244.600 L43.800 242.700 L40.600 244.600 L41.500 241.100 L38.800 238.800 L42.400 238.500Z" fill="#fbd020" stroke="#e8a810" stroke-width="0.600"/><path d="M42.500 263.500 L52 260.500 L58.500 262.500 L58.500 277.500 L49 281.500 L40.500 278 L40.800 270Z" fill="#8a5e2e"/><path d="M52 260.500 L58.500 262.500 L58.500 277.500 L52 279.800Z" fill="#6e4a22"/><path d="M40.500 270.500 L49.500 273 L49 281.500 L40.500 278Z" fill="#c49858"/><path d="M44 266 L51 264 L51 270 L45 272Z" fill="#d8c070" opacity="0.800"/><path d="M42.500 263.500 L52 260.500 L58.500 262.500 L49.500 265.500Z" fill="#a87840"/><path d="M46 294.200 L55.500 297 L58.500 306 L54.500 314 L46.500 316.300 L41.500 309.500 L43 299Z" fill="#e8b878"/><path d="M46 294.200 L55.500 297 L56.500 302 L45 300.500Z" fill="#f8cc70"/><path d="M44 302 L52 301 L53.500 309 L46 312Z" fill="#f4dca0"/><path d="M45 303.500 L51 303" stroke="#d04030" stroke-width="0.900"/><path d="M46 309 L48 311" stroke="#555" stroke-width="1"/><path d="M52.500 301 L58.500 306 L54.500 314 L53 309Z" fill="#c89858"/><path d="M41.300 332 L41.300 346 A8.500 3.500 0 0 0 58.300 346 L58.300 332Z" fill="url(#nSil)"/><path d="M41.300 335.5 A8.500 3 0 0 0 58.300 335.5" fill="none" stroke="#7a8a94" stroke-width="0.800"/><path d="M41.300 339 A8.500 3 0 0 0 58.300 339" fill="none" stroke="#7a8a94" stroke-width="0.800"/><path d="M41.300 342.5 A8.500 3 0 0 0 58.300 342.5" fill="none" stroke="#7a8a94" stroke-width="0.800"/><path d="M41.300 346 A8.500 3 0 0 0 58.300 346" fill="none" stroke="#7a8a94" stroke-width="0.800"/><ellipse cx="49.800" cy="332" rx="8.500" ry="3.800" fill="#e8eef0" stroke="#98a4ac" stroke-width="0.800"/><path d="M45 331.800 L48.500 333.300 L54.500 330.500" stroke="#7cc040" stroke-width="1.800" fill="none"/><path d="M40 372 L40 378 A4 2 0 0 0 48 378 L48 372Z" fill="#f0a820"/><ellipse cx="44" cy="372" rx="4" ry="2.200" fill="#fcd050" stroke="#f0b030" stroke-width="0.500"/><path d="M46.5 369.5 L46.5 375.5 A4 2 0 0 0 54.5 375.5 L54.5 369.5Z" fill="#f0a820"/><ellipse cx="50.5" cy="369.5" rx="4" ry="2.200" fill="#fcd050" stroke="#f0b030" stroke-width="0.500"/><path d="M52 372.5 L52 378.5 A4 2 0 0 0 60 378.5 L60 372.5Z" fill="#f0a820"/><ellipse cx="56" cy="372.5" rx="4" ry="2.200" fill="#fcd050" stroke="#f0b030" stroke-width="0.500"/><path d="M43 376.5 L43 382.5 A4 2 0 0 0 51 382.5 L51 376.5Z" fill="#f0a820"/><ellipse cx="47" cy="376.5" rx="4" ry="2.200" fill="#fcd050" stroke="#f0b030" stroke-width="0.500"/><path d="M49.5 377 L49.5 383 A4 2 0 0 0 57.5 383 L57.5 377Z" fill="#f0a820"/><ellipse cx="53.5" cy="377" rx="4" ry="2.200" fill="#fcd050" stroke="#f0b030" stroke-width="0.500"/><path d="M41 400 L52 396 L58 404 L60 412 L52 417 L44 412Z" fill="#d4d8dc" opacity="0.900"/><path d="M45.500 405 L52 398.500 M52 398.500 L56.500 397 M45.500 405 L56 407 M45.500 405 L51.500 414 M56 407 L60.500 411" stroke="#8a9298" stroke-width="1"/><rect x="41.500" y="402" width="6" height="6.500" fill="#4a78d0" stroke="#9ab0e0" stroke-width="0.800"/><rect x="50" y="399.500" width="3.600" height="4" fill="#28a048"/><rect x="55" y="395.800" width="3" height="3.400" fill="#d83030"/><rect x="55" y="405.500" width="3.200" height="3.600" fill="#d83030"/><rect x="50.300" y="413" width="3.600" height="4" fill="#28a048"/><path d="M49.600 430 L49.600 449" stroke="#f4c088" stroke-width="2"/><path d="M42 433.800 Q49.600 429.500 57.500 434.500" stroke="#f4c088" stroke-width="1.600" fill="none"/><ellipse cx="49.600" cy="450.500" rx="4.500" ry="2" fill="#f4c088"/><circle cx="49.600" cy="430.500" r="1.500" fill="#f8d0a0"/><path d="M42.500 433.500 L40.300 441 L45 441Z" fill="#c8c8a8" opacity="0.900"/><path d="M57 434.500 L54.500 442 L59.800 442Z" fill="#c8c8a8" opacity="0.900"/><path d="M40 440.500 L45.500 440.500 L45.500 446 L40 446Z" fill="#f8d020"/><path d="M54 441.500 L60 441.500 L60 448.500 L54 448.500Z" fill="#f8b850"/><path d="M44.500 464.500 L57 463.800 L58.500 465 L58.500 484.500 L45.500 486Z" fill="#e8d888" stroke="#c8b460" stroke-width="0.500"/><path d="M48 466.500 L55.500 466 L55.500 485 L48 485.500Z" fill="#fbd468"/><path d="M55.500 466 L57.500 466 L57.500 484.500 L55.500 485Z" fill="#d8d8d8"/><path d="M41 472 L49.500 471 L50 486 L41.500 486.500Z" fill="#38b0d8"/><path d="M41 472 L45.500 471.500 L44 486.300 L41.500 486.500Z" fill="#80d8e8"/><path d="M46.500 474 L49.500 471 L50 486Z" fill="#2878c0" opacity="0.700"/><path d="M44.8 498.5 L55.8 499.3 L55.8 516.0 L42.8 517.5 Z" fill="url(#nDoc)" stroke="#bdbdbd" stroke-width="0.700"/><rect x="46.3" y="502.5" width="6.5" height="1.200" fill="#a4a4a4" opacity="0.850"/><rect x="46.3" y="504.9" width="6.5" height="1.200" fill="#a4a4a4" opacity="0.850"/><rect x="46.3" y="507.3" width="6.5" height="1.200" fill="#a4a4a4" opacity="0.850"/><rect x="46.3" y="509.7" width="6.5" height="1.200" fill="#a4a4a4" opacity="0.850"/><rect x="46.3" y="512.1" width="6.5" height="1.200" fill="#a4a4a4" opacity="0.850"/><circle cx="44" cy="514.500" r="4.800" fill="url(#nGr)" stroke="#d8e8d8" stroke-width="0.800"/><path d="M41.300 514.500 L46.700 514.500 M44 511.800 L44 517.200" stroke="#fff" stroke-width="1.700"/><path d="M52.500 517.500 L60.500 508" stroke="#a89070" stroke-width="1.500"/><path d="M50.500 519.500 L52.500 517.500" stroke="#444" stroke-width="1.200"/><path d="M43.8 532.3 L57.3 533.0999999999999 L57.3 551.3 L41.8 552.8 Z" fill="url(#nDoc)" stroke="#bdbdbd" stroke-width="0.700"/><rect x="45.3" y="536.3" width="9.0" height="1.200" fill="#a4a4a4" opacity="0.850"/><rect x="45.3" y="538.7" width="9.0" height="1.200" fill="#a4a4a4" opacity="0.850"/><rect x="45.3" y="541.1" width="9.0" height="1.200" fill="#a4a4a4" opacity="0.850"/><rect x="45.3" y="543.5" width="9.0" height="1.200" fill="#a4a4a4" opacity="0.850"/><rect x="45.3" y="545.9" width="9.0" height="1.200" fill="#a4a4a4" opacity="0.850"/><circle cx="55.700" cy="548" r="4.700" fill="url(#nGr)"/><path d="M53.200 547.500 A2.600 2.600 0 0 1 57.800 546.500 M58.200 548.600 A2.600 2.600 0 0 1 53.600 549.600" stroke="#fff" stroke-width="1.300" fill="none"/><path d="M44.500 567.500 L58.500 566.300 L58.500 584 L46 586Z" fill="#c9c9c9" stroke="#9a9a9a" stroke-width="0.600"/><path d="M48 569.500 L56.500 568.800 L56.500 582.500 L48 583.800Z" fill="#2e2e2e"/><rect x="49" y="570.800" width="6.500" height="2.600" fill="#f4c030"/><rect x="49" y="575.300" width="6.500" height="2.600" fill="#f4c030"/><rect x="49" y="579.600" width="6.500" height="2.600" fill="#f0b428"/><path d="M40.500 569.500 L46 567.500 L47.500 585 L44 588.500 L41.500 583Z" fill="#7c7c7c"/><path d="M41.500 570.500 L45 569.300 L46 580 L42.500 581Z" fill="#b4b4b4"/><path d="M38.500 612 A11.800 12 0 0 1 62 611 L62 623 L40 623 Q38.300 618 38.500 612Z" fill="url(#nGold)" stroke="#b87c18" stroke-width="0.700"/><path d="M45 606 Q50 602 54 606 Q58 610 54 614 L56 618 L50 622 L44 620 L47 614 Q43 610 45 606Z" fill="#f8c838" stroke="#c06818" stroke-width="0.800"/><path d="M40.500 611 L43.500 609.500 L43.500 613.500 L40.500 614Z" fill="#2a9a58"/><path d="M42 616 L47 622 M44 614 L49 619 M51 608 L55 611" stroke="#d04818" stroke-width="0.800" opacity="0.800"/><path d="M19 654 L36 659.500 L41.500 655 L25 650.500Z" fill="#d04040"/><path d="M19 654 L36 659.500 L36 660.500 L19 655Z" fill="#a02828"/><path d="M21.500 643 L27 641.500 L31 643.500 L31 654.500 L25.500 656 L21.500 653.500Z" fill="#b4bcc0"/><path d="M21.500 643 L27 641.500 L31 643.500 L25.500 645Z" fill="#d8dde0"/><path d="M22.500 646.500 L25 647.500 L25 650.500 L22.500 649.500Z" fill="#5a8ac0"/><rect x="27" y="638" width="2.800" height="15" fill="#c4cace"/><rect x="27" y="636.500" width="2.800" height="2" fill="#e0b030"/><rect x="31.500" y="644" width="2.200" height="12" fill="#b8c0c4"/><rect x="34.500" y="645" width="2.200" height="11.500" fill="#b8c0c4"/><rect x="37.300" y="646.500" width="2" height="9.500" fill="#b0b8bc"/><rect x="31.700" y="651" width="1.700" height="3.500" fill="#e8a828"/><rect x="34.700" y="652" width="1.700" height="3.500" fill="#e8a828"/><path d="M33.500 679 L38.500 677.500 L41.500 683.500 L37.500 686.500Z" fill="#3a3a3a"/><path d="M32.500 680.500 L34.300 679.300 L38.300 686.300 L36.500 687.500Z" fill="#f0f0f0"/><path d="M19.500 690.500 Q22 686 28 685.500 L33.500 681.500 L37 687 Q33 693 25 695 L20 695.500Z" fill="#f6c6a4"/><path d="M19.300 687 Q26 683 34.500 685.500 L36 689 Q28 692.500 20 691.500Z" fill="#48b868"/><path d="M19.300 687 Q26 683 34.500 685.500 L34.800 686.800 Q26 685 19.800 688.500Z" fill="#8adc98"/><g transform="translate(29.5,714.3) scale(0.66)"><path d="M-8.500 22 Q-8.500 13 -3 12 L3 12 Q8.500 13 8.500 22 Z" fill="url(#nSuit)"/><path d="M-1.200 12.500 L1.200 12.500 L0.800 19 L0 20.500 L-0.800 19Z" fill="#222"/><ellipse cx="0" cy="6.500" rx="4.100" ry="5.300" fill="#f7d3ba"/><path d="M-4.500 6 Q-5.200 0 0 0 Q5.200 0 4.600 6 Q4 3 2 2.800 Q-2 3.500 -3.800 3.200 Q-4.300 4.500 -4.500 6Z" fill="#141414"/></g><g transform="translate(36,714) scale(0.66)"><path d="M-8.500 22 Q-8.500 13 -3 12 L3 12 Q8.500 13 8.500 22 Z" fill="url(#nSuit)"/><path d="M-1.200 12.500 L1.200 12.500 L0.800 19 L0 20.500 L-0.800 19Z" fill="#222"/><ellipse cx="0" cy="6.500" rx="4.100" ry="5.300" fill="#f7d3ba"/><path d="M-4.500 6 Q-5.200 0 0 0 Q5.200 0 4.600 6 Q4 3 2 2.800 Q-2 3.500 -3.800 3.200 Q-4.300 4.500 -4.500 6Z" fill="#141414"/></g><g transform="translate(25,718) scale(0.9)"><path d="M-8.500 22 Q-8.500 13 -3 12 L3 12 Q8.500 13 8.500 22 Z" fill="url(#nSuit)"/><path d="M-1.200 12.500 L1.200 12.500 L0.800 19 L0 20.500 L-0.800 19Z" fill="#222"/><ellipse cx="0" cy="6.500" rx="4.100" ry="5.300" fill="#f7d3ba"/><path d="M-4.500 6 Q-5.200 0 0 0 Q5.200 0 4.600 6 Q4 3 2 2.800 Q-2 3.500 -3.800 3.200 Q-4.300 4.500 -4.500 6Z" fill="#141414"/></g><g transform="translate(34.5,720.3) scale(0.8)"><path d="M-8.500 22 Q-8.500 13 -3 12 L3 12 Q8.500 13 8.500 22 Z" fill="url(#nSuit)"/><path d="M-1.200 12.500 L1.200 12.500 L0.800 19 L0 20.500 L-0.800 19Z" fill="#222"/><ellipse cx="0" cy="6.500" rx="4.100" ry="5.300" fill="#f7d3ba"/><path d="M-4.500 6 Q-5.200 0 0 0 Q5.200 0 4.600 6 Q4 3 2 2.800 Q-2 3.500 -3.800 3.200 Q-4.300 4.500 -4.500 6Z" fill="#141414"/></g><path d="M33.4 767.1 L33.4 768.9 L31.4 769.3 L30.9 770.6 L32.4 772.1 L31.3 773.6 L29.4 772.7 L28.3 773.5 L28.6 775.6 L26.9 776.1 L25.9 774.3 L24.5 774.3 L23.5 776.1 L21.8 775.6 L22.1 773.5 L21.0 772.7 L19.1 773.6 L18.0 772.1 L19.5 770.6 L19.0 769.3 L17.0 768.9 L17.0 767.1 L19.0 766.7 L19.5 765.4 L18.0 763.9 L19.1 762.4 L21.0 763.3 L22.1 762.5 L21.8 760.4 L23.5 759.9 L24.5 761.7 L25.9 761.7 L26.9 759.9 L28.6 760.4 L28.3 762.5 L29.4 763.3 L31.3 762.4 L32.4 763.9 L30.9 765.4 L31.4 766.7Z" fill="url(#nGear)" stroke="#8a949c" stroke-width="0.500"/><circle cx="25.2" cy="768" r="2.5" fill="#59626a"/><path d="M43.8 761.3 L43.8 763.1 L41.7 763.5 L41.3 764.9 L42.8 766.5 L41.7 768.0 L39.7 767.0 L38.5 767.9 L38.8 770.0 L37.0 770.6 L36.0 768.7 L34.6 768.7 L33.6 770.6 L31.8 770.0 L32.1 767.9 L30.9 767.0 L28.9 768.0 L27.8 766.5 L29.3 764.9 L28.9 763.5 L26.8 763.1 L26.8 761.3 L28.9 760.9 L29.3 759.5 L27.8 757.9 L28.9 756.4 L30.9 757.4 L32.1 756.5 L31.8 754.4 L33.6 753.8 L34.6 755.7 L36.0 755.7 L37.0 753.8 L38.8 754.4 L38.5 756.5 L39.7 757.4 L41.7 756.4 L42.8 757.9 L41.3 759.5 L41.7 760.9Z" fill="url(#nGear)" stroke="#8a949c" stroke-width="0.500"/><circle cx="35.3" cy="762.2" r="2.6" fill="#59626a"/><path d="M25.500 803 L25.500 798.500 Q25.500 792.800 30.300 792.800 Q35.200 792.800 35.200 798.500 L35.200 803" fill="none" stroke="#b8bcc0" stroke-width="2.600"/><path d="M26.300 799 Q26.300 794 30.300 794" fill="none" stroke="#f0f0f0" stroke-width="0.800"/><rect x="22.800" y="801.500" width="15.200" height="13.300" rx="2.200" fill="#b9bdc1" stroke="#8e9296" stroke-width="0.600"/><rect x="22.800" y="806.500" width="15.200" height="6.300" fill="#f4b428"/><path d="M24.0 806.500 L26.0 806.500 L27.3 812.800 L25.3 812.800Z" fill="#1c1c1c"/><path d="M27.8 806.500 L29.8 806.500 L31.1 812.800 L29.1 812.800Z" fill="#1c1c1c"/><path d="M31.6 806.500 L33.6 806.500 L34.9 812.800 L32.9 812.800Z" fill="#1c1c1c"/><path d="M35.4 806.500 L37.4 806.500 L38.7 812.800 L36.7 812.800Z" fill="#1c1c1c"/><g transform="translate(19.3,833.5) scale(1.0)"><path d="M8 5 L20.500 7.500 L20.500 20 L8 17Z" fill="#cfdae6" opacity="0.850"/><path d="M0 14.500 L18 19 L20.500 17.500" fill="none" stroke="#9aa8b4" stroke-width="1"/><path d="M0.800 1 L4.300 0 L4.300 14 L0.800 13.200Z" fill="#98d070"/><path d="M4.800 4.500 L8.300 4 L8.300 15.500 L4.800 14.700Z" fill="#f6a850"/><path d="M8.800 7.500 L12.300 7.200 L12.300 17 L8.800 16.200Z" fill="#38a8e0"/><path d="M11.500 17.500 L16.500 18.800 L16.500 20.300 L11.500 19Z" fill="#f07858"/></g><path d="M40.500 867.500 L60.800 872.500 L60.800 890 L40.500 884.500Z" fill="#cfcfcf"/><path d="M41.500 871 L44 870.500 L44 882 L41.500 881.500Z" fill="#98d070"/><path d="M44.500 873 L47.300 873 L47.300 883.500 L44.500 882.800Z" fill="#f8b868"/><path d="M48 876 L52 876 L52 885 L48 884Z" fill="#30b0c8"/><path d="M39 881.500 L55 886" stroke="#9aa8b4" stroke-width="1"/><path d="M51 886 L55 887 L55 888.300 L51 887.300Z" fill="#f07858"/><circle cx="58" cy="878" r="1.800" fill="none" stroke="#a8a8e0" stroke-width="0.800"/><path d="M44.500 905.500 L50 912.500 L56 920" stroke="#fff" stroke-width="1.200"/><rect x="40.500" y="901.800" width="8" height="8" fill="#4a88d0" stroke="#b8d0e0" stroke-width="0.800"/><rect x="46.800" y="908.800" width="7" height="7.500" fill="#4a88d0" stroke="#b8d0e0" stroke-width="0.800"/><rect x="52.800" y="916" width="7" height="7.500" fill="#d02830" stroke="#e0b8b8" stroke-width="0.800"/><path d="M42.500 907.500 L44.500 904 L46.500 907.500Z" fill="#d8ecf8"/><path d="M48.500 914 L50.300 911 L52 914Z" fill="#d8ecf8"/><path d="M38.800 936 L59.800 940.500 Q61 940.800 61 942 L61.500 957.500 L39.300 952Z" fill="#fff" stroke="#a0a8b0" stroke-width="1.200" stroke-linejoin="round"/><path d="M39.300 952 L61.500 957.500" stroke="#8cc8d0" stroke-width="1.600"/><ellipse cx="48.500" cy="943.500" rx="3.800" ry="3.600" fill="#f6b440"/><ellipse cx="45.300" cy="948.500" rx="3.600" ry="3.900" fill="#d2363e"/><ellipse cx="52" cy="949.500" rx="3.600" ry="3.900" fill="#2090d0"/><path d="M48 946.500 L50 946.300 L50 949.500 L48.500 949.800Z" fill="#3b7a40"/></svg>
<div class="" style="position:absolute;left:302px;top:553px;width:2px;height:2px;background:#5f8fd6;box-shadow:1px 1px 0 #dbe8fb;"></div>
<div class="" style="position:absolute;left:302px;top:557px;width:2px;height:2px;background:#5f8fd6;box-shadow:1px 1px 0 #dbe8fb;"></div>
<div class="" style="position:absolute;left:302px;top:561px;width:2px;height:2px;background:#5f8fd6;box-shadow:1px 1px 0 #dbe8fb;"></div>
<div class="" style="position:absolute;left:302px;top:565px;width:2px;height:2px;background:#5f8fd6;box-shadow:1px 1px 0 #dbe8fb;"></div>
<div class="" style="position:absolute;left:302px;top:569px;width:2px;height:2px;background:#5f8fd6;box-shadow:1px 1px 0 #dbe8fb;"></div>
<svg style="left:316px;top:125px" width="160" height="23" viewBox="0 0 160 23"><defs><linearGradient id="gTabA" x1="0" y1="0" x2="0" y2="1"><stop offset="0" stop-color="#fafcff"/><stop offset="0.5" stop-color="#edf3fc"/><stop offset="1" stop-color="#e9f0fb"/></linearGradient></defs><path d="M0.500 22.500 L18 3.500 Q20 1.500 23 1.500 L78 1.500 Q81.500 1.500 81.500 5 L81.500 22.500 Z" fill="#adcaf2" stroke="#7fa5dc"/><path d="M74 22.500 L91 3.500 Q93 1.500 96 1.500 L150 1.500 Q153.500 1.500 153.500 5 L153.500 23 L74 23 Z" fill="url(#gTabA)" stroke="#6f9ad4"/></svg>
<span class="t " style="left:338.00px;top:129.02px;font-size:11.5px;line-height:16px;color:#7686a6;transform:scaleX(0.8964);transform-origin:left center;">JO-000028</span>
<span class="t " style="left:411.00px;top:128.84px;font-size:12px;line-height:16px;color:#15428b;font-weight:bold;transform:scaleX(0.9443);transform-origin:left center;">Inventory</span>
<svg style="left:1612px;top:127px" width="74" height="16" viewBox="0 0 74 16"><path d="M10.500 6 L10.500 14.500 L6 10.200Z" fill="#d3e3fb"/><path d="M23 6 L23 14.500 L27.500 10.200Z" fill="#d3e3fb"/><path d="M40 6.500 L48.500 6.500 L44.200 10.800Z" fill="#15428b"/><path d="M60 4 L67.500 11.500 M67.500 4 L60 11.500" stroke="#15428b" stroke-width="1.700"/></svg>
<div class="" style="position:absolute;left:306px;top:147px;width:1379px;height:853px;border:1px solid #6f9ad4;background:#bfdbff;box-shadow:inset 0 0 0 4px #ecf1fa, 1px 0 0 rgba(200,225,255,0.6);border-bottom-color:#6a94d2;"></div>
<div class="" style="position:absolute;left:391.5px;top:147px;width:77.5px;height:1px;background:#e9f0fb;"></div>
<div class="" style="position:absolute;left:311px;top:152px;width:1369px;height:30px;border:1px solid #7d9fd4;border-radius:4px;background:linear-gradient(#ecf1fb 0,#e8eefa 13px,#d5e1f3 14px,#dde7f6 28px);"></div>
<span class="t " style="left:344.50px;top:158.84px;font-size:12px;line-height:16px;color:#15428b;transform:scaleX(0.9490);transform-origin:left center;">Filters</span>
<div class="" style="position:absolute;left:672px;top:188px;width:60px;height:26px;border:1px solid #7fa5dc;border-bottom:none;border-radius:3px 3px 0 0;background:linear-gradient(#f3f7fd,#e9f0fb);"></div>
<span class="t " style="left:326.00px;top:191.84px;font-size:12px;line-height:16px;color:#15428b;transform:scaleX(0.9353);transform-origin:left center;">Other items</span>
<span class="t " style="left:401.00px;top:191.84px;font-size:12px;line-height:16px;color:#15428b;transform:scaleX(0.9453);transform-origin:left center;">Rings</span>
<span class="t " style="left:446.00px;top:191.84px;font-size:12px;line-height:16px;color:#15428b;transform:scaleX(0.9396);transform-origin:left center;">Bracelets</span>
<span class="t " style="left:509.00px;top:191.84px;font-size:12px;line-height:16px;color:#15428b;transform:scaleX(0.9400);transform-origin:left center;">Earrings</span>
<span class="t " style="left:567.00px;top:191.84px;font-size:12px;line-height:16px;color:#15428b;transform:scaleX(0.9397);transform-origin:left center;">Amethyst</span>
<span class="t " style="left:630.00px;top:191.84px;font-size:12px;line-height:16px;color:#15428b;transform:scaleX(0.9054);transform-origin:left center;">Amber</span>
<span class="t " style="left:680.00px;top:191.84px;font-size:12px;line-height:16px;color:#15428b;transform:scaleX(0.9263);transform-origin:left center;">All items</span>
<span class="t " style="left:739.00px;top:191.84px;font-size:12px;line-height:16px;color:#15428b;transform:scaleX(0.9374);transform-origin:left center;">Summary list</span>
<svg style="left:1620px;top:192px" width="54" height="16" viewBox="0 0 54 16"><path d="M13 3.500 L13 11.500 L9 7.500Z" fill="#d3e3fb"/><path d="M25 3.500 L25 11.500 L29 7.500Z" fill="#d3e3fb"/><path d="M40 5.500 L48 5.500 L44 9.500Z" fill="#15428b"/></svg>
<div class="" style="position:absolute;left:316px;top:212px;width:1358px;height:776px;border:1px solid #6f9ad4;border-radius:3px;background:#e9f0fb;"></div>
<div class="" style="position:absolute;left:673px;top:212px;width:58px;height:2px;background:#e9f0fb;"></div>
<div class="" style="position:absolute;left:321px;top:217px;width:1349px;height:738px;border:1px solid #6f9ad4;background:#fff;"></div>
<div class="" style="position:absolute;left:322px;top:218px;width:1347px;height:23px;background:linear-gradient(#d9e5f8,#eef3fc);"></div>
<svg style="left:1645px;top:221px" width="16" height="16" viewBox="0 0 16 16"><path d="M2.500 2 L8 7 L13.500 2 M2.500 7.500 L8 12.500 L13.500 7.500" stroke="#1c5cd0" stroke-width="2.200" fill="none"/></svg>
<div class="hdr" style="left:323px;width:129px"></div>
<span class="t " style="left:349.59px;top:248.69px;font-size:11px;line-height:15px;color:#000;">Movement date</span>
<div class="fc" style="left:323px;width:129px"></div>
<span class="t" style="left:325.5px;top:274.1px;font-size:11px;line-height:20px;color:#000">Equals:</span>
<svg style="left:435px;top:279px" width="12" height="11" viewBox="0 0 12 11"><path d="M0.700 0.700 L11.300 0.700 L7 5.300 L7 9.800 L5 8.800 L5 5.300 Z" fill="#f2f7fe" stroke="#2c5aa6" stroke-width="1.100" stroke-linejoin="round"/></svg>
<div class="hdr" style="left:452px;width:128px"></div>
<span class="t " style="left:493.38px;top:248.69px;font-size:11px;line-height:15px;color:#000;">Item type</span>
<div class="fc" style="left:452px;width:128px"></div>
<span class="t" style="left:454.5px;top:274.1px;font-size:11px;line-height:20px;color:#000">Contains:</span>
<svg style="left:563px;top:279px" width="12" height="11" viewBox="0 0 12 11"><path d="M0.700 0.700 L11.300 0.700 L7 5.300 L7 9.800 L5 8.800 L5 5.300 Z" fill="#f2f7fe" stroke="#2c5aa6" stroke-width="1.100" stroke-linejoin="round"/></svg>
<div class="hdr" style="left:580px;width:119px"></div>
<span class="t " style="left:613.21px;top:248.69px;font-size:11px;line-height:15px;color:#000;">Item group</span>
<div class="fc" style="left:580px;width:119px"></div>
<span class="t" style="left:582.5px;top:274.1px;font-size:11px;line-height:20px;color:#000">Contains:</span>
<svg style="left:682px;top:279px" width="12" height="11" viewBox="0 0 12 11"><path d="M0.700 0.700 L11.300 0.700 L7 5.300 L7 9.800 L5 8.800 L5 5.300 Z" fill="#f2f7fe" stroke="#2c5aa6" stroke-width="1.100" stroke-linejoin="round"/></svg>
<div class="hdr" style="left:699px;width:69px"></div>
<span class="t " style="left:713.02px;top:248.69px;font-size:11px;line-height:15px;color:#000;">Quantity</span>
<div class="fc" style="left:699px;width:69px"></div>
<span class="t" style="left:701.5px;top:274.1px;font-size:11px;line-height:20px;color:#000">Equals:</span>
<svg style="left:751px;top:279px" width="12" height="11" viewBox="0 0 12 11"><path d="M0.700 0.700 L11.300 0.700 L7 5.300 L7 9.800 L5 8.800 L5 5.300 Z" fill="#f2f7fe" stroke="#2c5aa6" stroke-width="1.100" stroke-linejoin="round"/></svg>
<div class="hdr" style="left:768px;width:49px"></div>
<span class="t " style="left:780.89px;top:248.69px;font-size:11px;line-height:15px;color:#000;">M.U.</span>
<div class="fc" style="left:768px;width:49px"></div>
<span class="t" style="left:770.5px;top:274.1px;font-size:11px;line-height:20px;color:#000">Co<span style="letter-spacing:-1.2px">...</span></span>
<svg style="left:800px;top:279px" width="12" height="11" viewBox="0 0 12 11"><path d="M0.700 0.700 L11.300 0.700 L7 5.300 L7 9.800 L5 8.800 L5 5.300 Z" fill="#f2f7fe" stroke="#2c5aa6" stroke-width="1.100" stroke-linejoin="round"/></svg>
<div class="hdr" style="left:817px;width:69px"></div>
<span class="t " style="left:840.19px;top:248.69px;font-size:11px;line-height:15px;color:#000;">Cost</span>
<div class="fc" style="left:817px;width:69px"></div>
<span class="t" style="left:819.5px;top:274.1px;font-size:11px;line-height:20px;color:#000">Equals:</span>
<svg style="left:869px;top:279px" width="12" height="11" viewBox="0 0 12 11"><path d="M0.700 0.700 L11.300 0.700 L7 5.300 L7 9.800 L5 8.800 L5 5.300 Z" fill="#f2f7fe" stroke="#2c5aa6" stroke-width="1.100" stroke-linejoin="round"/></svg>
<div class="hdr" style="left:886px;width:69px"></div>
<span class="t " style="left:907.97px;top:248.69px;font-size:11px;line-height:15px;color:#000;">Price</span>
<div class="fc" style="left:886px;width:69px"></div>
<span class="t" style="left:888.5px;top:274.1px;font-size:11px;line-height:20px;color:#000">Equals:</span>
<svg style="left:938px;top:279px" width="12" height="11" viewBox="0 0 12 11"><path d="M0.700 0.700 L11.300 0.700 L7 5.300 L7 9.800 L5 8.800 L5 5.300 Z" fill="#f2f7fe" stroke="#2c5aa6" stroke-width="1.100" stroke-linejoin="round"/></svg>
<div class="hdr" style="left:955px;width:69px"></div>
<span class="t " style="left:966.27px;top:248.69px;font-size:11px;line-height:15px;color:#000;">Total cost</span>
<div class="fc" style="left:955px;width:69px"></div>
<span class="t" style="left:957.5px;top:274.1px;font-size:11px;line-height:20px;color:#000">Equals:</span>
<svg style="left:1007px;top:279px" width="12" height="11" viewBox="0 0 12 11"><path d="M0.700 0.700 L11.300 0.700 L7 5.300 L7 9.800 L5 8.800 L5 5.300 Z" fill="#f2f7fe" stroke="#2c5aa6" stroke-width="1.100" stroke-linejoin="round"/></svg>
<div class="hdr" style="left:1024px;width:69px"></div>
<span class="t " style="left:1033.43px;top:248.69px;font-size:11px;line-height:15px;color:#000;">Total price</span>
<div class="fc" style="left:1024px;width:69px"></div>
<span class="t" style="left:1026.5px;top:274.1px;font-size:11px;line-height:20px;color:#000">Equals:</span>
<svg style="left:1076px;top:279px" width="12" height="11" viewBox="0 0 12 11"><path d="M0.700 0.700 L11.300 0.700 L7 5.300 L7 9.800 L5 8.800 L5 5.300 Z" fill="#f2f7fe" stroke="#2c5aa6" stroke-width="1.100" stroke-linejoin="round"/></svg>
<div class="hdr" style="left:1093px;width:110px"></div>
<span class="t " style="left:1132.41px;top:248.69px;font-size:11px;line-height:15px;color:#000;">Status</span>
<div class="fc" style="left:1093px;width:110px"></div>
<span class="t" style="left:1095.5px;top:274.1px;font-size:11px;line-height:20px;color:#000">Contains:</span>
<svg style="left:1186px;top:279px" width="12" height="11" viewBox="0 0 12 11"><path d="M0.700 0.700 L11.300 0.700 L7 5.300 L7 9.800 L5 8.800 L5 5.300 Z" fill="#f2f7fe" stroke="#2c5aa6" stroke-width="1.100" stroke-linejoin="round"/></svg>
<div class="hdr" style="left:1203px;width:49px"></div>
<span class="t " style="left:1212.22px;top:248.69px;font-size:11px;line-height:15px;color:#000;">Image</span>
<div class="fc" style="left:1203px;width:49px"></div>
<span class="t" style="left:1205.5px;top:274.1px;font-size:11px;line-height:20px;color:#000">No<span style="letter-spacing:-1.2px">...</span></span>
<svg style="left:1235px;top:279px" width="12" height="11" viewBox="0 0 12 11"><path d="M0.700 0.700 L11.300 0.700 L7 5.300 L7 9.800 L5 8.800 L5 5.300 Z" fill="#f2f7fe" stroke="#2c5aa6" stroke-width="1.100" stroke-linejoin="round"/></svg>
<div class="hdr" style="left:1252px;width:69px"></div>
<span class="t " style="left:1268.77px;top:248.69px;font-size:11px;line-height:15px;color:#000;">Ref no.</span>
<div class="fc" style="left:1252px;width:69px"></div>
<span class="t" style="left:1254.5px;top:274.1px;font-size:11px;line-height:20px;color:#000">Contai<span style="letter-spacing:-1.2px">...</span></span>
<svg style="left:1304px;top:279px" width="12" height="11" viewBox="0 0 12 11"><path d="M0.700 0.700 L11.300 0.700 L7 5.300 L7 9.800 L5 8.800 L5 5.300 Z" fill="#f2f7fe" stroke="#2c5aa6" stroke-width="1.100" stroke-linejoin="round"/></svg>
<div class="hdr" style="left:1321px;width:69px"></div>
<span class="t " style="left:1334.71px;top:248.69px;font-size:11px;line-height:15px;color:#000;">Location</span>
<div class="fc" style="left:1321px;width:69px"></div>
<span class="t" style="left:1323.5px;top:274.1px;font-size:11px;line-height:20px;color:#000">Contai<span style="letter-spacing:-1.2px">...</span></span>
<svg style="left:1373px;top:279px" width="12" height="11" viewBox="0 0 12 11"><path d="M0.700 0.700 L11.300 0.700 L7 5.300 L7 9.800 L5 8.800 L5 5.300 Z" fill="#f2f7fe" stroke="#2c5aa6" stroke-width="1.100" stroke-linejoin="round"/></svg>
<div class="hdr" style="left:1390px;width:262px"></div>
<span class="t " style="left:1514.13px;top:248.69px;font-size:11px;line-height:15px;color:#000;">Notes</span>
<div class="fc" style="left:1390px;width:262px"></div>
<span class="t" style="left:1392.5px;top:274.1px;font-size:11px;line-height:20px;color:#000">Contains:</span>
<div class="" style="position:absolute;left:322px;top:296px;width:1329px;height:1px;background:#c4d6f0;"></div>
<svg style="left:1350px;top:241px" width="10" height="5" viewBox="0 0 10 5"><path d="M0.500 0 L9.500 0 L5 4.500Z" fill="#2c5aa6"/></svg>
<div style="position:absolute;left:322px;top:297px;width:1329px;height:640px;overflow:hidden">
<div class="row" style="top:0px;left:0;background:linear-gradient(#fff1a6 0,#fff1a6 1px,#fee09e 1px,#fdd98c 10px,#fdd078 21px,#fff1a6 21px,#fff1a6 22px);border-bottom-color:#fdb464;left:0"><div class="c" style="left:1px;width:129px;border-right-color:#d6e3f5;"></div><div class="c" style="left:130px;width:128px;border-right-color:#d6e3f5;"></div><div class="c" style="left:258px;width:119px;border-right-color:#d6e3f5;"></div><div class="c" style="left:377px;width:69px;border-right-color:#d6e3f5;"></div><div class="c" style="left:446px;width:49px;border-right-color:#d6e3f5;"></div><div class="c" style="left:495px;width:69px;border-right-color:#d6e3f5;"></div><div class="c" style="left:564px;width:69px;border-right-color:#d6e3f5;"></div><div class="c" style="left:633px;width:69px;border-right-color:#d6e3f5;"></div><div class="c" style="left:702px;width:69px;border-right-color:#d6e3f5;"></div><div class="c" style="left:771px;width:110px;border-right-color:#d6e3f5;"></div><div class="c" style="left:881px;width:49px;border-right-color:#d6e3f5;"></div><div class="c" style="left:930px;width:69px;border-right-color:#d6e3f5;"></div><div class="c" style="left:999px;width:69px;border-right-color:#d6e3f5;"></div><div class="c" style="left:1068px;width:262px;border-right-color:#d6e3f5;"></div><div class="c" style="left:1px;width:128px;border:none;line-height:22px;text-align:center;">Sep-28-2015  03:14:02<span style="letter-spacing:-1.2px">...</span></div><div class="c" style="left:130px;width:127px;border:none;line-height:22px;padding-left:3px;">SAPD001</div><div class="c" style="left:258px;width:118px;border:none;line-height:22px;padding-left:3px;">Pendants</div><div class="c g" style="left:377px;width:68px;border:none;line-height:22px;padding-right:2px;text-align:right;letter-spacing:-0.1px;">1.0000</div><div class="c" style="left:446px;width:48px;border:none;line-height:22px;text-align:center;">pcs</div><div class="c" style="left:495px;width:68px;border:none;line-height:22px;padding-right:3px;text-align:right;letter-spacing:-0.15px;">$510.37</div><div class="c" style="left:564px;width:68px;border:none;line-height:22px;padding-right:3px;text-align:right;letter-spacing:-0.15px;">$1,743.27</div><div class="c" style="left:633px;width:68px;border:none;line-height:22px;padding-right:3px;text-align:right;letter-spacing:-0.15px;">$510.37</div><div class="c" style="left:702px;width:68px;border:none;line-height:22px;padding-right:3px;text-align:right;letter-spacing:-0.15px;">$1,743.27</div><div class="c" style="left:771px;width:109px;border:none;line-height:22px;text-align:center;">Received</div><div class="c" style="left:930px;width:68px;border:none;line-height:22px;text-align:center;">JO-000039</div><div class="c" style="left:999px;width:68px;border:none;line-height:22px;padding-left:3px;"><span style="color:#2d4fb5;text-decoration:underline;font-size:11px;letter-spacing:0.15px">Finished g<span style="letter-spacing:-1.2px">...</span></span></div><div style="position:absolute;left:0;top:0;width:129px;height:23px;border:1px solid #ff8a24;"></div></div>
<div class="row" style="top:23px;left:0;left:0"><div class="c" style="left:1px;width:129px;"></div><div class="c" style="left:130px;width:128px;"></div><div class="c" style="left:258px;width:119px;"></div><div class="c" style="left:377px;width:69px;"></div><div class="c" style="left:446px;width:49px;"></div><div class="c" style="left:495px;width:69px;"></div><div class="c" style="left:564px;width:69px;"></div><div class="c" style="left:633px;width:69px;"></div><div class="c" style="left:702px;width:69px;"></div><div class="c" style="left:771px;width:110px;"></div><div class="c" style="left:881px;width:49px;"></div><div class="c" style="left:930px;width:69px;"></div><div class="c" style="left:999px;width:69px;"></div><div class="c" style="left:1068px;width:262px;"></div><div class="c" style="left:1px;width:128px;border:none;line-height:22px;text-align:center;">Sep-29-2015  05:53:49<span style="letter-spacing:-1.2px">...</span></div><div class="c" style="left:130px;width:127px;border:none;line-height:22px;padding-left:3px;">SADP</div><div class="c" style="left:258px;width:118px;border:none;line-height:22px;padding-left:3px;">Pendants</div><div class="c g" style="left:377px;width:68px;border:none;line-height:22px;padding-right:2px;text-align:right;letter-spacing:-0.1px;">1.0000</div><div class="c" style="left:446px;width:48px;border:none;line-height:22px;text-align:center;">pcs</div><div class="c" style="left:564px;width:68px;border:none;line-height:22px;padding-right:3px;text-align:right;letter-spacing:-0.15px;">$1,976.24</div><div class="c" style="left:702px;width:68px;border:none;line-height:22px;padding-right:3px;text-align:right;letter-spacing:-0.15px;">$1,976.24</div><div class="c" style="left:771px;width:109px;border:none;line-height:22px;text-align:center;">Received</div><div class="c" style="left:930px;width:68px;border:none;line-height:22px;text-align:center;">000008</div><div class="c" style="left:1068px;width:261px;border:none;line-height:22px;padding-left:3px;">-</div></div>
<div class="row" style="top:46px;left:0;left:0"><div class="c" style="left:1px;width:129px;"></div><div class="c" style="left:130px;width:128px;"></div><div class="c" style="left:258px;width:119px;"></div><div class="c" style="left:377px;width:69px;"></div><div class="c" style="left:446px;width:49px;"></div><div class="c" style="left:495px;width:69px;"></div><div class="c" style="left:564px;width:69px;"></div><div class="c" style="left:633px;width:69px;"></div><div class="c" style="left:702px;width:69px;"></div><div class="c" style="left:771px;width:110px;"></div><div class="c" style="left:881px;width:49px;"></div><div class="c" style="left:930px;width:69px;"></div><div class="c" style="left:999px;width:69px;"></div><div class="c" style="left:1068px;width:262px;"></div><div class="c" style="left:1px;width:128px;border:none;line-height:22px;text-align:center;">Sep-29-2015  05:43:42<span style="letter-spacing:-1.2px">...</span></div><div class="c" style="left:130px;width:127px;border:none;line-height:22px;padding-left:3px;">WB002</div><div class="c" style="left:258px;width:118px;border:none;line-height:22px;padding-left:3px;">Rings</div><div class="c g" style="left:377px;width:68px;border:none;line-height:22px;padding-right:2px;text-align:right;letter-spacing:-0.1px;">10.0000</div><div class="c" style="left:446px;width:48px;border:none;line-height:22px;text-align:center;">pcs</div><div class="c" style="left:564px;width:68px;border:none;line-height:22px;padding-right:3px;text-align:right;letter-spacing:-0.15px;">$366.55</div><div class="c" style="left:702px;width:68px;border:none;line-height:22px;padding-right:3px;text-align:right;letter-spacing:-0.15px;">$3,665.50</div><div class="c" style="left:771px;width:109px;border:none;line-height:22px;text-align:center;">Received</div><div class="c" style="left:930px;width:68px;border:none;line-height:22px;text-align:center;">000007</div><div class="c" style="left:1068px;width:261px;border:none;line-height:22px;padding-left:3px;">Poor quality. Customer do<span style="letter-spacing:-1.2px">...</span></div></div>
<div class="row" style="top:69px;left:0;left:0"><div class="c" style="left:1px;width:129px;"></div><div class="c" style="left:130px;width:128px;"></div><div class="c" style="left:258px;width:119px;"></div><div class="c" style="left:377px;width:69px;"></div><div class="c" style="left:446px;width:49px;"></div><div class="c" style="left:495px;width:69px;"></div><div class="c" style="left:564px;width:69px;"></div><div class="c" style="left:633px;width:69px;"></div><div class="c" style="left:702px;width:69px;"></div><div class="c" style="left:771px;width:110px;"></div><div class="c" style="left:881px;width:49px;"></div><div class="c" style="left:930px;width:69px;"></div><div class="c" style="left:999px;width:69px;"></div><div class="c" style="left:1068px;width:262px;"></div><div class="c" style="left:1px;width:128px;border:none;line-height:22px;text-align:center;">Sep-29-2015  02:01:15<span style="letter-spacing:-1.2px">...</span></div><div class="c" style="left:130px;width:127px;border:none;line-height:22px;padding-left:3px;">SADP</div><div class="c" style="left:258px;width:118px;border:none;line-height:22px;padding-left:3px;">Pendants</div><div class="c g" style="left:377px;width:68px;border:none;line-height:22px;padding-right:2px;text-align:right;letter-spacing:-0.1px;">1.0000</div><div class="c" style="left:446px;width:48px;border:none;line-height:22px;text-align:center;">pcs</div><div class="c" style="left:564px;width:68px;border:none;line-height:22px;padding-right:3px;text-align:right;letter-spacing:-0.15px;">$250.00</div><div class="c" style="left:702px;width:68px;border:none;line-height:22px;padding-right:3px;text-align:right;letter-spacing:-0.15px;">$250.00</div><div class="c" style="left:771px;width:109px;border:none;line-height:22px;text-align:center;">Received</div><div class="c" style="left:930px;width:68px;border:none;line-height:22px;text-align:center;">000006</div><div class="c" style="left:1068px;width:261px;border:none;line-height:22px;padding-left:3px;">-</div></div>
<div class="row" style="top:92px;left:0;left:0"><div class="c" style="left:1px;width:129px;"></div><div class="c" style="left:130px;width:128px;"></div><div class="c" style="left:258px;width:119px;"></div><div class="c" style="left:377px;width:69px;"></div><div class="c" style="left:446px;width:49px;"></div><div class="c" style="left:495px;width:69px;"></div><div class="c" style="left:564px;width:69px;"></div><div class="c" style="left:633px;width:69px;"></div><div class="c" style="left:702px;width:69px;"></div><div class="c" style="left:771px;width:110px;"></div><div class="c" style="left:881px;width:49px;"></div><div class="c" style="left:930px;width:69px;"></div><div class="c" style="left:999px;width:69px;"></div><div class="c" style="left:1068px;width:262px;"></div><div class="c" style="left:1px;width:128px;border:none;line-height:22px;text-align:center;">Sep-29-2015  02:01:14<span style="letter-spacing:-1.2px">...</span></div><div class="c" style="left:130px;width:127px;border:none;line-height:22px;padding-left:3px;">ER001</div><div class="c" style="left:258px;width:118px;border:none;line-height:22px;padding-left:3px;">Rings</div><div class="c g" style="left:377px;width:68px;border:none;line-height:22px;padding-right:2px;text-align:right;letter-spacing:-0.1px;">1.0000</div><div class="c" style="left:446px;width:48px;border:none;line-height:22px;text-align:center;">pcs</div><div class="c" style="left:564px;width:68px;border:none;line-height:22px;padding-right:3px;text-align:right;letter-spacing:-0.15px;">$1,400.00</div><div class="c" style="left:702px;width:68px;border:none;line-height:22px;padding-right:3px;text-align:right;letter-spacing:-0.15px;">$1,400.00</div><div class="c" style="left:771px;width:109px;border:none;line-height:22px;text-align:center;">Received</div><div class="c" style="left:930px;width:68px;border:none;line-height:22px;text-align:center;">000006</div><div class="c" style="left:1068px;width:261px;border:none;line-height:22px;padding-left:3px;">-</div></div>
<div class="row" style="top:115px;left:0;left:0"><div class="c" style="left:1px;width:129px;"></div><div class="c" style="left:130px;width:128px;"></div><div class="c" style="left:258px;width:119px;"></div><div class="c" style="left:377px;width:69px;"></div><div class="c" style="left:446px;width:49px;"></div><div class="c" style="left:495px;width:69px;"></div><div class="c" style="left:564px;width:69px;"></div><div class="c" style="left:633px;width:69px;"></div><div class="c" style="left:702px;width:69px;"></div><div class="c" style="left:771px;width:110px;"></div><div class="c" style="left:881px;width:49px;"></div><div class="c" style="left:930px;width:69px;"></div><div class="c" style="left:999px;width:69px;"></div><div class="c" style="left:1068px;width:262px;"></div><div class="c" style="left:1px;width:128px;border:none;line-height:22px;text-align:center;">Sep-25-2015  02:51:44<span style="letter-spacing:-1.2px">...</span></div><div class="c" style="left:130px;width:127px;border:none;line-height:22px;padding-left:3px;">WB001</div><div class="c" style="left:258px;width:118px;border:none;line-height:22px;padding-left:3px;">Rings</div><div class="c r" style="left:377px;width:68px;border:none;line-height:22px;padding-right:2px;text-align:right;letter-spacing:-0.1px;">-100.0000</div><div class="c" style="left:446px;width:48px;border:none;line-height:22px;text-align:center;">pcs</div><div class="c" style="left:564px;width:68px;border:none;line-height:22px;padding-right:3px;text-align:right;letter-spacing:-0.15px;">$441.66</div><div class="c" style="left:702px;width:68px;border:none;line-height:22px;padding-right:3px;text-align:right;letter-spacing:-0.15px;">$44,166.00</div><div class="c" style="left:771px;width:109px;border:none;line-height:22px;text-align:center;">-</div><div class="c" style="left:930px;width:68px;border:none;line-height:22px;text-align:center;">OC-000002</div><div class="c" style="left:1068px;width:261px;border:none;line-height:22px;padding-left:3px;">Items unloaded by outgoing consignment</div></div>
<div class="row" style="top:138px;left:0;left:0"><div class="c" style="left:1px;width:129px;"></div><div class="c" style="left:130px;width:128px;"></div><div class="c" style="left:258px;width:119px;"></div><div class="c" style="left:377px;width:69px;"></div><div class="c" style="left:446px;width:49px;"></div><div class="c" style="left:495px;width:69px;"></div><div class="c" style="left:564px;width:69px;"></div><div class="c" style="left:633px;width:69px;"></div><div class="c" style="left:702px;width:69px;"></div><div class="c" style="left:771px;width:110px;"></div><div class="c" style="left:881px;width:49px;"></div><div class="c" style="left:930px;width:69px;"></div><div class="c" style="left:999px;width:69px;"></div><div class="c" style="left:1068px;width:262px;"></div><div class="c" style="left:1px;width:128px;border:none;line-height:22px;text-align:center;">Sep-25-2015  02:51:44<span style="letter-spacing:-1.2px">...</span></div><div class="c" style="left:130px;width:127px;border:none;line-height:22px;padding-left:3px;">ER001</div><div class="c" style="left:258px;width:118px;border:none;line-height:22px;padding-left:3px;">Rings</div><div class="c r" style="left:377px;width:68px;border:none;line-height:22px;padding-right:2px;text-align:right;letter-spacing:-0.1px;">-100.0000</div><div class="c" style="left:446px;width:48px;border:none;line-height:22px;text-align:center;">pcs</div><div class="c" style="left:564px;width:68px;border:none;line-height:22px;padding-right:3px;text-align:right;letter-spacing:-0.15px;">$149.04</div><div class="c" style="left:702px;width:68px;border:none;line-height:22px;padding-right:3px;text-align:right;letter-spacing:-0.15px;">$14,904.00</div><div class="c" style="left:771px;width:109px;border:none;line-height:22px;text-align:center;">-</div><div class="c" style="left:930px;width:68px;border:none;line-height:22px;text-align:center;">OC-000002</div><div class="c" style="left:1068px;width:261px;border:none;line-height:22px;padding-left:3px;">Items unloaded by outgoing consignment</div></div>
<div class="row" style="top:161px;left:0;left:0"><div class="c" style="left:1px;width:129px;"></div><div class="c" style="left:130px;width:128px;"></div><div class="c" style="left:258px;width:119px;"></div><div class="c" style="left:377px;width:69px;"></div><div class="c" style="left:446px;width:49px;"></div><div class="c" style="left:495px;width:69px;"></div><div class="c" style="left:564px;width:69px;"></div><div class="c" style="left:633px;width:69px;"></div><div class="c" style="left:702px;width:69px;"></div><div class="c" style="left:771px;width:110px;"></div><div class="c" style="left:881px;width:49px;"></div><div class="c" style="left:930px;width:69px;"></div><div class="c" style="left:999px;width:69px;"></div><div class="c" style="left:1068px;width:262px;"></div><div class="c" style="left:1px;width:128px;border:none;line-height:22px;text-align:center;">Sep-25-2015  02:51:44<span style="letter-spacing:-1.2px">...</span></div><div class="c" style="left:130px;width:127px;border:none;line-height:22px;padding-left:3px;">CB001Y</div><div class="c" style="left:258px;width:118px;border:none;line-height:22px;padding-left:3px;">Rings</div><div class="c r" style="left:377px;width:68px;border:none;line-height:22px;padding-right:2px;text-align:right;letter-spacing:-0.1px;">-50.0000</div><div class="c" style="left:446px;width:48px;border:none;line-height:22px;text-align:center;">pcs</div><div class="c" style="left:564px;width:68px;border:none;line-height:22px;padding-right:3px;text-align:right;letter-spacing:-0.15px;">$1,543.98</div><div class="c" style="left:702px;width:68px;border:none;line-height:22px;padding-right:3px;text-align:right;letter-spacing:-0.15px;">$77,199.00</div><div class="c" style="left:771px;width:109px;border:none;line-height:22px;text-align:center;">-</div><div class="c" style="left:930px;width:68px;border:none;line-height:22px;text-align:center;">OC-000002</div><div class="c" style="left:1068px;width:261px;border:none;line-height:22px;padding-left:3px;">Items unloaded by outgoing consignment</div></div>
<div class="row" style="top:184px;left:0;left:0"><div class="c" style="left:1px;width:129px;"></div><div class="c" style="left:130px;width:128px;"></div><div class="c" style="left:258px;width:119px;"></div><div class="c" style="left:377px;width:69px;"></div><div class="c" style="left:446px;width:49px;"></div><div class="c" style="left:495px;width:69px;"></div><div class="c" style="left:564px;width:69px;"></div><div class="c" style="left:633px;width:69px;"></div><div class="c" style="left:702px;width:69px;"></div><div class="c" style="left:771px;width:110px;"></div><div class="c" style="left:881px;width:49px;"></div><div class="c" style="left:930px;width:69px;"></div><div class="c" style="left:999px;width:69px;"></div><div class="c" style="left:1068px;width:262px;"></div><div class="c" style="left:1px;width:128px;border:none;line-height:22px;text-align:center;">Sep-25-2015  02:51:44<span style="letter-spacing:-1.2px">...</span></div><div class="c" style="left:130px;width:127px;border:none;line-height:22px;padding-left:3px;">Earring4</div><div class="c" style="left:258px;width:118px;border:none;line-height:22px;padding-left:3px;">Earrings</div><div class="c r" style="left:377px;width:68px;border:none;line-height:22px;padding-right:2px;text-align:right;letter-spacing:-0.1px;">-50.0000</div><div class="c" style="left:446px;width:48px;border:none;line-height:22px;text-align:center;">pcs</div><div class="c" style="left:495px;width:68px;border:none;line-height:22px;padding-right:3px;text-align:right;letter-spacing:-0.15px;">$0.00</div><div class="c" style="left:564px;width:68px;border:none;line-height:22px;padding-right:3px;text-align:right;letter-spacing:-0.15px;">$38.00</div><div class="c" style="left:633px;width:68px;border:none;line-height:22px;padding-right:3px;text-align:right;letter-spacing:-0.15px;">$0.00</div><div class="c" style="left:702px;width:68px;border:none;line-height:22px;padding-right:3px;text-align:right;letter-spacing:-0.15px;">$1,900.00</div><div class="c" style="left:771px;width:109px;border:none;line-height:22px;text-align:center;">-</div><div class="c" style="left:930px;width:68px;border:none;line-height:22px;text-align:center;">OC-000002</div><div class="c" style="left:1068px;width:261px;border:none;line-height:22px;padding-left:3px;">Items unloaded by outgoing consignment</div></div>
<div class="row" style="top:207px;left:0;left:0"><div class="c" style="left:1px;width:129px;"></div><div class="c" style="left:130px;width:128px;"></div><div class="c" style="left:258px;width:119px;"></div><div class="c" style="left:377px;width:69px;"></div><div class="c" style="left:446px;width:49px;"></div><div class="c" style="left:495px;width:69px;"></div><div class="c" style="left:564px;width:69px;"></div><div class="c" style="left:633px;width:69px;"></div><div class="c" style="left:702px;width:69px;"></div><div class="c" style="left:771px;width:110px;"></div><div class="c" style="left:881px;width:49px;"></div><div class="c" style="left:930px;width:69px;"></div><div class="c" style="left:999px;width:69px;"></div><div class="c" style="left:1068px;width:262px;"></div><div class="c" style="left:1px;width:128px;border:none;line-height:22px;text-align:center;">Sep-25-2015  02:51:44<span style="letter-spacing:-1.2px">...</span></div><div class="c" style="left:130px;width:127px;border:none;line-height:22px;padding-left:3px;">Earring2</div><div class="c" style="left:258px;width:118px;border:none;line-height:22px;padding-left:3px;">Earrings</div><div class="c r" style="left:377px;width:68px;border:none;line-height:22px;padding-right:2px;text-align:right;letter-spacing:-0.1px;">-50.0000</div><div class="c" style="left:446px;width:48px;border:none;line-height:22px;text-align:center;">pcs</div><div class="c" style="left:495px;width:68px;border:none;line-height:22px;padding-right:3px;text-align:right;letter-spacing:-0.15px;">$0.00</div><div class="c" style="left:564px;width:68px;border:none;line-height:22px;padding-right:3px;text-align:right;letter-spacing:-0.15px;">$32.00</div><div class="c" style="left:633px;width:68px;border:none;line-height:22px;padding-right:3px;text-align:right;letter-spacing:-0.15px;">$0.00</div><div class="c" style="left:702px;width:68px;border:none;line-height:22px;padding-right:3px;text-align:right;letter-spacing:-0.15px;">$1,600.00</div><div class="c" style="left:771px;width:109px;border:none;line-height:22px;text-align:center;">-</div><div class="c" style="left:930px;width:68px;border:none;line-height:22px;text-align:center;">OC-000002</div><div class="c" style="left:1068px;width:261px;border:none;line-height:22px;padding-left:3px;">Items unloaded by outgoing consignment</div></div>
<div class="row" style="top:230px;left:0;left:0"><div class="c" style="left:1px;width:129px;"></div><div class="c" style="left:130px;width:128px;"></div><div class="c" style="left:258px;width:119px;"></div><div class="c" style="left:377px;width:69px;"></div><div class="c" style="left:446px;width:49px;"></div><div class="c" style="left:495px;width:69px;"></div><div class="c" style="left:564px;width:69px;"></div><div class="c" style="left:633px;width:69px;"></div><div class="c" style="left:702px;width:69px;"></div><div class="c" style="left:771px;width:110px;"></div><div class="c" style="left:881px;width:49px;"></div><div class="c" style="left:930px;width:69px;"></div><div class="c" style="left:999px;width:69px;"></div><div class="c" style="left:1068px;width:262px;"></div><div class="c" style="left:1px;width:128px;border:none;line-height:22px;text-align:center;">Sep-25-2015  02:50:57<span style="letter-spacing:-1.2px">...</span></div><div class="c" style="left:130px;width:127px;border:none;line-height:22px;padding-left:3px;">CB001Y</div><div class="c" style="left:258px;width:118px;border:none;line-height:22px;padding-left:3px;">Rings</div><div class="c g" style="left:377px;width:68px;border:none;line-height:22px;padding-right:2px;text-align:right;letter-spacing:-0.1px;">3,000.0000</div><div class="c" style="left:446px;width:48px;border:none;line-height:22px;text-align:center;">pcs</div><div class="c" style="left:495px;width:68px;border:none;line-height:22px;padding-right:3px;text-align:right;letter-spacing:-0.15px;">$0.00</div><div class="c" style="left:564px;width:68px;border:none;line-height:22px;padding-right:3px;text-align:right;letter-spacing:-0.15px;">$1,474.38</div><div class="c" style="left:633px;width:68px;border:none;line-height:22px;padding-right:3px;text-align:right;letter-spacing:-0.15px;">$0.00</div><div class="c" style="left:702px;width:68px;border:none;line-height:22px;padding-right:3px;text-align:right;letter-spacing:-0.15px;">$4,423,14<span style="letter-spacing:-1.2px">...</span></div><div class="c" style="left:771px;width:109px;border:none;line-height:22px;padding-left:5px;text-align:left;">Incoming  moveme<span style="letter-spacing:-1.2px">...</span></div><div class="c" style="left:930px;width:68px;border:none;line-height:22px;text-align:center;">-</div><div class="c" style="left:1068px;width:261px;border:none;line-height:22px;padding-left:3px;">-</div></div>
<div class="row" style="top:253px;left:0;left:0"><div class="c" style="left:1px;width:129px;"></div><div class="c" style="left:130px;width:128px;"></div><div class="c" style="left:258px;width:119px;"></div><div class="c" style="left:377px;width:69px;"></div><div class="c" style="left:446px;width:49px;"></div><div class="c" style="left:495px;width:69px;"></div><div class="c" style="left:564px;width:69px;"></div><div class="c" style="left:633px;width:69px;"></div><div class="c" style="left:702px;width:69px;"></div><div class="c" style="left:771px;width:110px;"></div><div class="c" style="left:881px;width:49px;"></div><div class="c" style="left:930px;width:69px;"></div><div class="c" style="left:999px;width:69px;"></div><div class="c" style="left:1068px;width:262px;"></div><div class="c" style="left:1px;width:128px;border:none;line-height:22px;text-align:center;">Sep-25-2015  02:50:33<span style="letter-spacing:-1.2px">...</span></div><div class="c" style="left:130px;width:127px;border:none;line-height:22px;padding-left:3px;">ER002</div><div class="c" style="left:258px;width:118px;border:none;line-height:22px;padding-left:3px;">Rings</div><div class="c r" style="left:377px;width:68px;border:none;line-height:22px;padding-right:2px;text-align:right;letter-spacing:-0.1px;">-100.0000</div><div class="c" style="left:446px;width:48px;border:none;line-height:22px;text-align:center;">pcs</div><div class="c" style="left:564px;width:68px;border:none;line-height:22px;padding-right:3px;text-align:right;letter-spacing:-0.15px;">$170.32</div><div class="c" style="left:702px;width:68px;border:none;line-height:22px;padding-right:3px;text-align:right;letter-spacing:-0.15px;">$17,032.00</div><div class="c" style="left:771px;width:109px;border:none;line-height:22px;text-align:center;">-</div><div class="c" style="left:930px;width:68px;border:none;line-height:22px;text-align:center;">OC-000003</div><div class="c" style="left:1068px;width:261px;border:none;line-height:22px;padding-left:3px;">Items unloaded by outgoing consignment</div></div>
<div class="row" style="top:276px;left:0;left:0"><div class="c" style="left:1px;width:129px;"></div><div class="c" style="left:130px;width:128px;"></div><div class="c" style="left:258px;width:119px;"></div><div class="c" style="left:377px;width:69px;"></div><div class="c" style="left:446px;width:49px;"></div><div class="c" style="left:495px;width:69px;"></div><div class="c" style="left:564px;width:69px;"></div><div class="c" style="left:633px;width:69px;"></div><div class="c" style="left:702px;width:69px;"></div><div class="c" style="left:771px;width:110px;"></div><div class="c" style="left:881px;width:49px;"></div><div class="c" style="left:930px;width:69px;"></div><div class="c" style="left:999px;width:69px;"></div><div class="c" style="left:1068px;width:262px;"></div><div class="c" style="left:1px;width:128px;border:none;line-height:22px;text-align:center;">Sep-25-2015  02:50:33<span style="letter-spacing:-1.2px">...</span></div><div class="c" style="left:130px;width:127px;border:none;line-height:22px;padding-left:3px;">WB002</div><div class="c" style="left:258px;width:118px;border:none;line-height:22px;padding-left:3px;">Rings</div><div class="c r" style="left:377px;width:68px;border:none;line-height:22px;padding-right:2px;text-align:right;letter-spacing:-0.1px;">-100.0000</div><div class="c" style="left:446px;width:48px;border:none;line-height:22px;text-align:center;">pcs</div><div class="c" style="left:564px;width:68px;border:none;line-height:22px;padding-right:3px;text-align:right;letter-spacing:-0.15px;">$290.04</div><div class="c" style="left:702px;width:68px;border:none;line-height:22px;padding-right:3px;text-align:right;letter-spacing:-0.15px;">$29,004.00</div><div class="c" style="left:771px;width:109px;border:none;line-height:22px;text-align:center;">-</div><div class="c" style="left:930px;width:68px;border:none;line-height:22px;text-align:center;">OC-000003</div><div class="c" style="left:1068px;width:261px;border:none;line-height:22px;padding-left:3px;">Items unloaded by outgoing consignment</div></div>
<div class="row" style="top:299px;left:0;left:0"><div class="c" style="left:1px;width:129px;"></div><div class="c" style="left:130px;width:128px;"></div><div class="c" style="left:258px;width:119px;"></div><div class="c" style="left:377px;width:69px;"></div><div class="c" style="left:446px;width:49px;"></div><div class="c" style="left:495px;width:69px;"></div><div class="c" style="left:564px;width:69px;"></div><div class="c" style="left:633px;width:69px;"></div><div class="c" style="left:702px;width:69px;"></div><div class="c" style="left:771px;width:110px;"></div><div class="c" style="left:881px;width:49px;"></div><div class="c" style="left:930px;width:69px;"></div><div class="c" style="left:999px;width:69px;"></div><div class="c" style="left:1068px;width:262px;"></div><div class="c" style="left:1px;width:128px;border:none;line-height:22px;text-align:center;">Sep-25-2015  02:50:33<span style="letter-spacing:-1.2px">...</span></div><div class="c" style="left:130px;width:127px;border:none;line-height:22px;padding-left:3px;">Earring4</div><div class="c" style="left:258px;width:118px;border:none;line-height:22px;padding-left:3px;">Earrings</div><div class="c r" style="left:377px;width:68px;border:none;line-height:22px;padding-right:2px;text-align:right;letter-spacing:-0.1px;">-100.0000</div><div class="c" style="left:446px;width:48px;border:none;line-height:22px;text-align:center;">pcs</div><div class="c" style="left:495px;width:68px;border:none;line-height:22px;padding-right:3px;text-align:right;letter-spacing:-0.15px;">$0.00</div><div class="c" style="left:564px;width:68px;border:none;line-height:22px;padding-right:3px;text-align:right;letter-spacing:-0.15px;">$38.00</div><div class="c" style="left:633px;width:68px;border:none;line-height:22px;padding-right:3px;text-align:right;letter-spacing:-0.15px;">$0.00</div><div class="c" style="left:702px;width:68px;border:none;line-height:22px;padding-right:3px;text-align:right;letter-spacing:-0.15px;">$3,800.00</div><div class="c" style="left:771px;width:109px;border:none;line-height:22px;text-align:center;">-</div><div class="c" style="left:930px;width:68px;border:none;line-height:22px;text-align:center;">OC-000003</div><div class="c" style="left:1068px;width:261px;border:none;line-height:22px;padding-left:3px;">Items unloaded by outgoing consignment</div></div>
<div class="row" style="top:322px;left:0;left:0"><div class="c" style="left:1px;width:129px;"></div><div class="c" style="left:130px;width:128px;"></div><div class="c" style="left:258px;width:119px;"></div><div class="c" style="left:377px;width:69px;"></div><div class="c" style="left:446px;width:49px;"></div><div class="c" style="left:495px;width:69px;"></div><div class="c" style="left:564px;width:69px;"></div><div class="c" style="left:633px;width:69px;"></div><div class="c" style="left:702px;width:69px;"></div><div class="c" style="left:771px;width:110px;"></div><div class="c" style="left:881px;width:49px;"></div><div class="c" style="left:930px;width:69px;"></div><div class="c" style="left:999px;width:69px;"></div><div class="c" style="left:1068px;width:262px;"></div><div class="c" style="left:1px;width:128px;border:none;line-height:22px;text-align:center;">Sep-25-2015  02:49:48<span style="letter-spacing:-1.2px">...</span></div><div class="c" style="left:130px;width:127px;border:none;line-height:22px;padding-left:3px;">WB002</div><div class="c" style="left:258px;width:118px;border:none;line-height:22px;padding-left:3px;">Rings</div><div class="c g" style="left:377px;width:68px;border:none;line-height:22px;padding-right:2px;text-align:right;letter-spacing:-0.1px;">1,500.0000</div><div class="c" style="left:446px;width:48px;border:none;line-height:22px;text-align:center;">pcs</div><div class="c" style="left:495px;width:68px;border:none;line-height:22px;padding-right:3px;text-align:right;letter-spacing:-0.15px;">$0.00</div><div class="c" style="left:564px;width:68px;border:none;line-height:22px;padding-right:3px;text-align:right;letter-spacing:-0.15px;">$239.46</div><div class="c" style="left:633px;width:68px;border:none;line-height:22px;padding-right:3px;text-align:right;letter-spacing:-0.15px;">$0.00</div><div class="c" style="left:702px;width:68px;border:none;line-height:22px;padding-right:3px;text-align:right;letter-spacing:-0.15px;">$359,190.<span style="letter-spacing:-1.2px">...</span></div><div class="c" style="left:771px;width:109px;border:none;line-height:22px;padding-left:5px;text-align:left;">Incoming  moveme<span style="letter-spacing:-1.2px">...</span></div><div class="c" style="left:930px;width:68px;border:none;line-height:22px;text-align:center;">-</div><div class="c" style="left:1068px;width:261px;border:none;line-height:22px;padding-left:3px;">-</div></div>
<div class="row" style="top:345px;left:0;left:0"><div class="c" style="left:1px;width:129px;"></div><div class="c" style="left:130px;width:128px;"></div><div class="c" style="left:258px;width:119px;"></div><div class="c" style="left:377px;width:69px;"></div><div class="c" style="left:446px;width:49px;"></div><div class="c" style="left:495px;width:69px;"></div><div class="c" style="left:564px;width:69px;"></div><div class="c" style="left:633px;width:69px;"></div><div class="c" style="left:702px;width:69px;"></div><div class="c" style="left:771px;width:110px;"></div><div class="c" style="left:881px;width:49px;"></div><div class="c" style="left:930px;width:69px;"></div><div class="c" style="left:999px;width:69px;"></div><div class="c" style="left:1068px;width:262px;"></div><div class="c" style="left:1px;width:128px;border:none;line-height:22px;text-align:center;">Sep-25-2015  02:48:59<span style="letter-spacing:-1.2px">...</span></div><div class="c" style="left:130px;width:127px;border:none;line-height:22px;padding-left:3px;">ER002</div><div class="c" style="left:258px;width:118px;border:none;line-height:22px;padding-left:3px;">Rings</div><div class="c g" style="left:377px;width:68px;border:none;line-height:22px;padding-right:2px;text-align:right;letter-spacing:-0.1px;">1,000.0000</div><div class="c" style="left:446px;width:48px;border:none;line-height:22px;text-align:center;">pcs</div><div class="c" style="left:495px;width:68px;border:none;line-height:22px;padding-right:3px;text-align:right;letter-spacing:-0.15px;">$0.00</div><div class="c" style="left:564px;width:68px;border:none;line-height:22px;padding-right:3px;text-align:right;letter-spacing:-0.15px;">$159.48</div><div class="c" style="left:633px;width:68px;border:none;line-height:22px;padding-right:3px;text-align:right;letter-spacing:-0.15px;">$0.00</div><div class="c" style="left:702px;width:68px;border:none;line-height:22px;padding-right:3px;text-align:right;letter-spacing:-0.15px;">$159,480.<span style="letter-spacing:-1.2px">...</span></div><div class="c" style="left:771px;width:109px;border:none;line-height:22px;padding-left:5px;text-align:left;">Incoming  moveme<span style="letter-spacing:-1.2px">...</span></div><div class="c" style="left:930px;width:68px;border:none;line-height:22px;text-align:center;">-</div><div class="c" style="left:1068px;width:261px;border:none;line-height:22px;padding-left:3px;">-</div></div>
<div class="row" style="top:368px;left:0;left:0"><div class="c" style="left:1px;width:129px;"></div><div class="c" style="left:130px;width:128px;"></div><div class="c" style="left:258px;width:119px;"></div><div class="c" style="left:377px;width:69px;"></div><div class="c" style="left:446px;width:49px;"></div><div class="c" style="left:495px;width:69px;"></div><div class="c" style="left:564px;width:69px;"></div><div class="c" style="left:633px;width:69px;"></div><div class="c" style="left:702px;width:69px;"></div><div class="c" style="left:771px;width:110px;"></div><div class="c" style="left:881px;width:49px;"></div><div class="c" style="left:930px;width:69px;"></div><div class="c" style="left:999px;width:69px;"></div><div class="c" style="left:1068px;width:262px;"></div><div class="c" style="left:1px;width:128px;border:none;line-height:22px;text-align:center;">Sep-25-2015  02:48:25<span style="letter-spacing:-1.2px">...</span></div><div class="c" style="left:130px;width:127px;border:none;line-height:22px;padding-left:3px;">WB001</div><div class="c" style="left:258px;width:118px;border:none;line-height:22px;padding-left:3px;">Rings</div><div class="c g" style="left:377px;width:68px;border:none;line-height:22px;padding-right:2px;text-align:right;letter-spacing:-0.1px;">1,000.0000</div><div class="c" style="left:446px;width:48px;border:none;line-height:22px;text-align:center;">pcs</div><div class="c" style="left:495px;width:68px;border:none;line-height:22px;padding-right:3px;text-align:right;letter-spacing:-0.15px;">$0.00</div><div class="c" style="left:564px;width:68px;border:none;line-height:22px;padding-right:3px;text-align:right;letter-spacing:-0.15px;">$384.72</div><div class="c" style="left:633px;width:68px;border:none;line-height:22px;padding-right:3px;text-align:right;letter-spacing:-0.15px;">$0.00</div><div class="c" style="left:702px;width:68px;border:none;line-height:22px;padding-right:3px;text-align:right;letter-spacing:-0.15px;">$384,720.<span style="letter-spacing:-1.2px">...</span></div><div class="c" style="left:771px;width:109px;border:none;line-height:22px;padding-left:5px;text-align:left;">Incoming  moveme<span style="letter-spacing:-1.2px">...</span></div><div class="c" style="left:930px;width:68px;border:none;line-height:22px;text-align:center;">-</div><div class="c" style="left:1068px;width:261px;border:none;line-height:22px;padding-left:3px;">-</div></div>
<div class="row" style="top:391px;left:0;left:0"><div class="c" style="left:1px;width:129px;"></div><div class="c" style="left:130px;width:128px;"></div><div class="c" style="left:258px;width:119px;"></div><div class="c" style="left:377px;width:69px;"></div><div class="c" style="left:446px;width:49px;"></div><div class="c" style="left:495px;width:69px;"></div><div class="c" style="left:564px;width:69px;"></div><div class="c" style="left:633px;width:69px;"></div><div class="c" style="left:702px;width:69px;"></div><div class="c" style="left:771px;width:110px;"></div><div class="c" style="left:881px;width:49px;"></div><div class="c" style="left:930px;width:69px;"></div><div class="c" style="left:999px;width:69px;"></div><div class="c" style="left:1068px;width:262px;"></div><div class="c" style="left:1px;width:128px;border:none;line-height:22px;text-align:center;">Sep-25-2015  02:48:30<span style="letter-spacing:-1.2px">...</span></div><div class="c" style="left:130px;width:127px;border:none;line-height:22px;padding-left:3px;">ER005</div><div class="c" style="left:258px;width:118px;border:none;line-height:22px;padding-left:3px;">Rings</div><div class="c r" style="left:377px;width:68px;border:none;line-height:22px;padding-right:2px;text-align:right;letter-spacing:-0.1px;">-500.0000</div><div class="c" style="left:446px;width:48px;border:none;line-height:22px;text-align:center;">pcs</div><div class="c" style="left:564px;width:68px;border:none;line-height:22px;padding-right:3px;text-align:right;letter-spacing:-0.15px;">$419.44</div><div class="c" style="left:702px;width:68px;border:none;line-height:22px;padding-right:3px;text-align:right;letter-spacing:-0.15px;">$209,720.<span style="letter-spacing:-1.2px">...</span></div><div class="c" style="left:771px;width:109px;border:none;line-height:22px;text-align:center;">-</div><div class="c" style="left:930px;width:68px;border:none;line-height:22px;text-align:center;">OC-000004</div><div class="c" style="left:1068px;width:261px;border:none;line-height:22px;padding-left:3px;">Items unloaded by outgoing consignment</div></div>
<div class="row" style="top:414px;left:0;left:0"><div class="c" style="left:1px;width:129px;"></div><div class="c" style="left:130px;width:128px;"></div><div class="c" style="left:258px;width:119px;"></div><div class="c" style="left:377px;width:69px;"></div><div class="c" style="left:446px;width:49px;"></div><div class="c" style="left:495px;width:69px;"></div><div class="c" style="left:564px;width:69px;"></div><div class="c" style="left:633px;width:69px;"></div><div class="c" style="left:702px;width:69px;"></div><div class="c" style="left:771px;width:110px;"></div><div class="c" style="left:881px;width:49px;"></div><div class="c" style="left:930px;width:69px;"></div><div class="c" style="left:999px;width:69px;"></div><div class="c" style="left:1068px;width:262px;"></div><div class="c" style="left:1px;width:128px;border:none;line-height:22px;text-align:center;">Sep-25-2015  02:48:30<span style="letter-spacing:-1.2px">...</span></div><div class="c" style="left:130px;width:127px;border:none;line-height:22px;padding-left:3px;">CB001Y</div><div class="c" style="left:258px;width:118px;border:none;line-height:22px;padding-left:3px;">Rings</div><div class="c r" style="left:377px;width:68px;border:none;line-height:22px;padding-right:2px;text-align:right;letter-spacing:-0.1px;">-500.0000</div><div class="c" style="left:446px;width:48px;border:none;line-height:22px;text-align:center;">pcs</div><div class="c" style="left:564px;width:68px;border:none;line-height:22px;padding-right:3px;text-align:right;letter-spacing:-0.15px;">$1,543.98</div><div class="c" style="left:702px;width:68px;border:none;line-height:22px;padding-right:3px;text-align:right;letter-spacing:-0.15px;">$771,990.<span style="letter-spacing:-1.2px">...</span></div><div class="c" style="left:771px;width:109px;border:none;line-height:22px;text-align:center;">-</div><div class="c" style="left:930px;width:68px;border:none;line-height:22px;text-align:center;">OC-000004</div><div class="c" style="left:1068px;width:261px;border:none;line-height:22px;padding-left:3px;">Items unloaded by outgoing consignment</div></div>
<div class="row" style="top:437px;left:0;left:0"><div class="c" style="left:1px;width:129px;"></div><div class="c" style="left:130px;width:128px;"></div><div class="c" style="left:258px;width:119px;"></div><div class="c" style="left:377px;width:69px;"></div><div class="c" style="left:446px;width:49px;"></div><div class="c" style="left:495px;width:69px;"></div><div class="c" style="left:564px;width:69px;"></div><div class="c" style="left:633px;width:69px;"></div><div class="c" style="left:702px;width:69px;"></div><div class="c" style="left:771px;width:110px;"></div><div class="c" style="left:881px;width:49px;"></div><div class="c" style="left:930px;width:69px;"></div><div class="c" style="left:999px;width:69px;"></div><div class="c" style="left:1068px;width:262px;"></div><div class="c" style="left:1px;width:128px;border:none;line-height:22px;text-align:center;">Sep-25-2015  02:41:16<span style="letter-spacing:-1.2px">...</span></div><div class="c" style="left:130px;width:127px;border:none;line-height:22px;padding-left:3px;">Earring4</div><div class="c" style="left:258px;width:118px;border:none;line-height:22px;padding-left:3px;">Earrings</div><div class="c g" style="left:377px;width:68px;border:none;line-height:22px;padding-right:2px;text-align:right;letter-spacing:-0.1px;">500.0000</div><div class="c" style="left:446px;width:48px;border:none;line-height:22px;text-align:center;">pcs</div><div class="c" style="left:495px;width:68px;border:none;line-height:22px;padding-right:3px;text-align:right;letter-spacing:-0.15px;">$0.00</div><div class="c" style="left:564px;width:68px;border:none;line-height:22px;padding-right:3px;text-align:right;letter-spacing:-0.15px;">$38.00</div><div class="c" style="left:633px;width:68px;border:none;line-height:22px;padding-right:3px;text-align:right;letter-spacing:-0.15px;">$0.00</div><div class="c" style="left:702px;width:68px;border:none;line-height:22px;padding-right:3px;text-align:right;letter-spacing:-0.15px;">$19,000.00</div><div class="c" style="left:771px;width:109px;border:none;line-height:22px;padding-left:5px;text-align:left;">Incoming  moveme<span style="letter-spacing:-1.2px">...</span></div><div class="c" style="left:930px;width:68px;border:none;line-height:22px;text-align:center;">-</div><div class="c" style="left:1068px;width:261px;border:none;line-height:22px;padding-left:3px;">-</div></div>
<div class="row" style="top:460px;left:0;left:0"><div class="c" style="left:1px;width:129px;"></div><div class="c" style="left:130px;width:128px;"></div><div class="c" style="left:258px;width:119px;"></div><div class="c" style="left:377px;width:69px;"></div><div class="c" style="left:446px;width:49px;"></div><div class="c" style="left:495px;width:69px;"></div><div class="c" style="left:564px;width:69px;"></div><div class="c" style="left:633px;width:69px;"></div><div class="c" style="left:702px;width:69px;"></div><div class="c" style="left:771px;width:110px;"></div><div class="c" style="left:881px;width:49px;"></div><div class="c" style="left:930px;width:69px;"></div><div class="c" style="left:999px;width:69px;"></div><div class="c" style="left:1068px;width:262px;"></div><div class="c" style="left:1px;width:128px;border:none;line-height:22px;text-align:center;">Sep-25-2015  02:37:27<span style="letter-spacing:-1.2px">...</span></div><div class="c" style="left:130px;width:127px;border:none;line-height:22px;padding-left:3px;">Earring2</div><div class="c" style="left:258px;width:118px;border:none;line-height:22px;padding-left:3px;">Earrings</div><div class="c g" style="left:377px;width:68px;border:none;line-height:22px;padding-right:2px;text-align:right;letter-spacing:-0.1px;">500.0000</div><div class="c" style="left:446px;width:48px;border:none;line-height:22px;text-align:center;">pcs</div><div class="c" style="left:495px;width:68px;border:none;line-height:22px;padding-right:3px;text-align:right;letter-spacing:-0.15px;">$0.00</div><div class="c" style="left:564px;width:68px;border:none;line-height:22px;padding-right:3px;text-align:right;letter-spacing:-0.15px;">$32.00</div><div class="c" style="left:633px;width:68px;border:none;line-height:22px;padding-right:3px;text-align:right;letter-spacing:-0.15px;">$0.00</div><div class="c" style="left:702px;width:68px;border:none;line-height:22px;padding-right:3px;text-align:right;letter-spacing:-0.15px;">$16,000.00</div><div class="c" style="left:771px;width:109px;border:none;line-height:22px;padding-left:5px;text-align:left;">Incoming  moveme<span style="letter-spacing:-1.2px">...</span></div><div class="c" style="left:930px;width:68px;border:none;line-height:22px;text-align:center;">-</div><div class="c" style="left:1068px;width:261px;border:none;line-height:22px;padding-left:3px;">-</div></div>
<div class="row" style="top:483px;left:0;left:0"><div class="c" style="left:1px;width:129px;"></div><div class="c" style="left:130px;width:128px;"></div><div class="c" style="left:258px;width:119px;"></div><div class="c" style="left:377px;width:69px;"></div><div class="c" style="left:446px;width:49px;"></div><div class="c" style="left:495px;width:69px;"></div><div class="c" style="left:564px;width:69px;"></div><div class="c" style="left:633px;width:69px;"></div><div class="c" style="left:702px;width:69px;"></div><div class="c" style="left:771px;width:110px;"></div><div class="c" style="left:881px;width:49px;"></div><div class="c" style="left:930px;width:69px;"></div><div class="c" style="left:999px;width:69px;"></div><div class="c" style="left:1068px;width:262px;"></div><div class="c" style="left:1px;width:128px;border:none;line-height:22px;text-align:center;">Sep-25-2015  02:36:12<span style="letter-spacing:-1.2px">...</span></div><div class="c" style="left:130px;width:127px;border:none;line-height:22px;padding-left:3px;">CB001Y</div><div class="c" style="left:258px;width:118px;border:none;line-height:22px;padding-left:3px;">Rings</div><div class="c g" style="left:377px;width:68px;border:none;line-height:22px;padding-right:2px;text-align:right;letter-spacing:-0.1px;">500.0000</div><div class="c" style="left:446px;width:48px;border:none;line-height:22px;text-align:center;">pcs</div><div class="c" style="left:495px;width:68px;border:none;line-height:22px;padding-right:3px;text-align:right;letter-spacing:-0.15px;">$0.00</div><div class="c" style="left:564px;width:68px;border:none;line-height:22px;padding-right:3px;text-align:right;letter-spacing:-0.15px;">$1,474.38</div><div class="c" style="left:633px;width:68px;border:none;line-height:22px;padding-right:3px;text-align:right;letter-spacing:-0.15px;">$0.00</div><div class="c" style="left:702px;width:68px;border:none;line-height:22px;padding-right:3px;text-align:right;letter-spacing:-0.15px;">$737,190.<span style="letter-spacing:-1.2px">...</span></div><div class="c" style="left:771px;width:109px;border:none;line-height:22px;padding-left:5px;text-align:left;">Incoming  moveme<span style="letter-spacing:-1.2px">...</span></div><div class="c" style="left:930px;width:68px;border:none;line-height:22px;text-align:center;">-</div><div class="c" style="left:1068px;width:261px;border:none;line-height:22px;padding-left:3px;">-</div></div>
<div class="row" style="top:506px;left:0;left:0"><div class="c" style="left:1px;width:129px;"></div><div class="c" style="left:130px;width:128px;"></div><div class="c" style="left:258px;width:119px;"></div><div class="c" style="left:377px;width:69px;"></div><div class="c" style="left:446px;width:49px;"></div><div class="c" style="left:495px;width:69px;"></div><div class="c" style="left:564px;width:69px;"></div><div class="c" style="left:633px;width:69px;"></div><div class="c" style="left:702px;width:69px;"></div><div class="c" style="left:771px;width:110px;"></div><div class="c" style="left:881px;width:49px;"></div><div class="c" style="left:930px;width:69px;"></div><div class="c" style="left:999px;width:69px;"></div><div class="c" style="left:1068px;width:262px;"></div><div class="c" style="left:1px;width:128px;border:none;line-height:22px;text-align:center;">Sep-25-2015  02:35:40<span style="letter-spacing:-1.2px">...</span></div><div class="c" style="left:130px;width:127px;border:none;line-height:22px;padding-left:3px;">CR001Y</div><div class="c" style="left:258px;width:118px;border:none;line-height:22px;padding-left:3px;">Rings</div><div class="c g" style="left:377px;width:68px;border:none;line-height:22px;padding-right:2px;text-align:right;letter-spacing:-0.1px;">500.0000</div><div class="c" style="left:446px;width:48px;border:none;line-height:22px;text-align:center;">pcs</div><div class="c" style="left:495px;width:68px;border:none;line-height:22px;padding-right:3px;text-align:right;letter-spacing:-0.15px;">$0.00</div><div class="c" style="left:564px;width:68px;border:none;line-height:22px;padding-right:3px;text-align:right;letter-spacing:-0.15px;">$1,164.22</div><div class="c" style="left:633px;width:68px;border:none;line-height:22px;padding-right:3px;text-align:right;letter-spacing:-0.15px;">$0.00</div><div class="c" style="left:702px;width:68px;border:none;line-height:22px;padding-right:3px;text-align:right;letter-spacing:-0.15px;">$582,110.<span style="letter-spacing:-1.2px">...</span></div><div class="c" style="left:771px;width:109px;border:none;line-height:22px;padding-left:5px;text-align:left;">Incoming  moveme<span style="letter-spacing:-1.2px">...</span></div><div class="c" style="left:930px;width:68px;border:none;line-height:22px;text-align:center;">-</div><div class="c" style="left:1068px;width:261px;border:none;line-height:22px;padding-left:3px;">-</div></div>
<div class="row" style="top:529px;left:0;left:0"><div class="c" style="left:1px;width:129px;"></div><div class="c" style="left:130px;width:128px;"></div><div class="c" style="left:258px;width:119px;"></div><div class="c" style="left:377px;width:69px;"></div><div class="c" style="left:446px;width:49px;"></div><div class="c" style="left:495px;width:69px;"></div><div class="c" style="left:564px;width:69px;"></div><div class="c" style="left:633px;width:69px;"></div><div class="c" style="left:702px;width:69px;"></div><div class="c" style="left:771px;width:110px;"></div><div class="c" style="left:881px;width:49px;"></div><div class="c" style="left:930px;width:69px;"></div><div class="c" style="left:999px;width:69px;"></div><div class="c" style="left:1068px;width:262px;"></div><div class="c" style="left:1px;width:128px;border:none;line-height:22px;text-align:center;">Sep-25-2015  02:35:03<span style="letter-spacing:-1.2px">...</span></div><div class="c" style="left:130px;width:127px;border:none;line-height:22px;padding-left:3px;">WB001</div><div class="c" style="left:258px;width:118px;border:none;line-height:22px;padding-left:3px;">Rings</div><div class="c g" style="left:377px;width:68px;border:none;line-height:22px;padding-right:2px;text-align:right;letter-spacing:-0.1px;">1,000.0000</div><div class="c" style="left:446px;width:48px;border:none;line-height:22px;text-align:center;">pcs</div><div class="c" style="left:495px;width:68px;border:none;line-height:22px;padding-right:3px;text-align:right;letter-spacing:-0.15px;">$0.00</div><div class="c" style="left:564px;width:68px;border:none;line-height:22px;padding-right:3px;text-align:right;letter-spacing:-0.15px;">$384.72</div><div class="c" style="left:633px;width:68px;border:none;line-height:22px;padding-right:3px;text-align:right;letter-spacing:-0.15px;">$0.00</div><div class="c" style="left:702px;width:68px;border:none;line-height:22px;padding-right:3px;text-align:right;letter-spacing:-0.15px;">$384,720.<span style="letter-spacing:-1.2px">...</span></div><div class="c" style="left:771px;width:109px;border:none;line-height:22px;padding-left:5px;text-align:left;">Incoming  moveme<span style="letter-spacing:-1.2px">...</span></div><div class="c" style="left:930px;width:68px;border:none;line-height:22px;text-align:center;">-</div><div class="c" style="left:1068px;width:261px;border:none;line-height:22px;padding-left:3px;">-</div></div>
<div class="row" style="top:552px;left:0;left:0"><div class="c" style="left:1px;width:129px;"></div><div class="c" style="left:130px;width:128px;"></div><div class="c" style="left:258px;width:119px;"></div><div class="c" style="left:377px;width:69px;"></div><div class="c" style="left:446px;width:49px;"></div><div class="c" style="left:495px;width:69px;"></div><div class="c" style="left:564px;width:69px;"></div><div class="c" style="left:633px;width:69px;"></div><div class="c" style="left:702px;width:69px;"></div><div class="c" style="left:771px;width:110px;"></div><div class="c" style="left:881px;width:49px;"></div><div class="c" style="left:930px;width:69px;"></div><div class="c" style="left:999px;width:69px;"></div><div class="c" style="left:1068px;width:262px;"></div><div class="c" style="left:1px;width:128px;border:none;line-height:22px;text-align:center;">Sep-25-2015  02:32:05<span style="letter-spacing:-1.2px">...</span></div><div class="c" style="left:130px;width:127px;border:none;line-height:22px;padding-left:3px;">ER005</div><div class="c" style="left:258px;width:118px;border:none;line-height:22px;padding-left:3px;">Rings</div><div class="c g" style="left:377px;width:68px;border:none;line-height:22px;padding-right:2px;text-align:right;letter-spacing:-0.1px;">1,000.0000</div><div class="c" style="left:446px;width:48px;border:none;line-height:22px;text-align:center;">pcs</div><div class="c" style="left:495px;width:68px;border:none;line-height:22px;padding-right:3px;text-align:right;letter-spacing:-0.15px;">$0.00</div><div class="c" style="left:564px;width:68px;border:none;line-height:22px;padding-right:3px;text-align:right;letter-spacing:-0.15px;">$358.76</div><div class="c" style="left:633px;width:68px;border:none;line-height:22px;padding-right:3px;text-align:right;letter-spacing:-0.15px;">$0.00</div><div class="c" style="left:702px;width:68px;border:none;line-height:22px;padding-right:3px;text-align:right;letter-spacing:-0.15px;">$358,760.<span style="letter-spacing:-1.2px">...</span></div><div class="c" style="left:771px;width:109px;border:none;line-height:22px;padding-left:5px;text-align:left;">Incoming  moveme<span style="letter-spacing:-1.2px">...</span></div><div class="c" style="left:930px;width:68px;border:none;line-height:22px;text-align:center;">-</div><div class="c" style="left:1068px;width:261px;border:none;line-height:22px;padding-left:3px;">-</div></div>
<div class="row" style="top:575px;left:0;left:0"><div class="c" style="left:1px;width:129px;"></div><div class="c" style="left:130px;width:128px;"></div><div class="c" style="left:258px;width:119px;"></div><div class="c" style="left:377px;width:69px;"></div><div class="c" style="left:446px;width:49px;"></div><div class="c" style="left:495px;width:69px;"></div><div class="c" style="left:564px;width:69px;"></div><div class="c" style="left:633px;width:69px;"></div><div class="c" style="left:702px;width:69px;"></div><div class="c" style="left:771px;width:110px;"></div><div class="c" style="left:881px;width:49px;"></div><div class="c" style="left:930px;width:69px;"></div><div class="c" style="left:999px;width:69px;"></div><div class="c" style="left:1068px;width:262px;"></div><div class="c" style="left:1px;width:128px;border:none;line-height:22px;text-align:center;">Sep-25-2015  02:16:47<span style="letter-spacing:-1.2px">...</span></div><div class="c" style="left:130px;width:127px;border:none;line-height:22px;padding-left:3px;">2mm Colored Stone</div><div class="c" style="left:258px;width:118px;border:none;line-height:22px;padding-left:3px;">Colored Stones</div><div class="c g" style="left:377px;width:68px;border:none;line-height:22px;padding-right:2px;text-align:right;letter-spacing:-0.1px;">7.0000</div><div class="c" style="left:446px;width:48px;border:none;line-height:22px;text-align:center;">Ct</div><div class="c" style="left:495px;width:68px;border:none;line-height:22px;padding-right:3px;text-align:right;letter-spacing:-0.15px;">$0.00</div><div class="c" style="left:564px;width:68px;border:none;line-height:22px;padding-right:3px;text-align:right;letter-spacing:-0.15px;">$17.00</div><div class="c" style="left:633px;width:68px;border:none;line-height:22px;padding-right:3px;text-align:right;letter-spacing:-0.15px;">$0.00</div><div class="c" style="left:702px;width:68px;border:none;line-height:22px;padding-right:3px;text-align:right;letter-spacing:-0.15px;">$119.00</div><div class="c" style="left:771px;width:109px;border:none;line-height:22px;text-align:center;">Received</div><div class="c" style="left:930px;width:68px;border:none;line-height:22px;text-align:center;">JO-000030</div><div class="c" style="left:1068px;width:261px;border:none;line-height:22px;padding-left:3px;">Job item returned to inventory weight</div></div>
<div class="row" style="top:598px;left:0;left:0"><div class="c" style="left:1px;width:129px;"></div><div class="c" style="left:130px;width:128px;"></div><div class="c" style="left:258px;width:119px;"></div><div class="c" style="left:377px;width:69px;"></div><div class="c" style="left:446px;width:49px;"></div><div class="c" style="left:495px;width:69px;"></div><div class="c" style="left:564px;width:69px;"></div><div class="c" style="left:633px;width:69px;"></div><div class="c" style="left:702px;width:69px;"></div><div class="c" style="left:771px;width:110px;"></div><div class="c" style="left:881px;width:49px;"></div><div class="c" style="left:930px;width:69px;"></div><div class="c" style="left:999px;width:69px;"></div><div class="c" style="left:1068px;width:262px;"></div><div class="c" style="left:1px;width:128px;border:none;line-height:22px;text-align:center;">Sep-25-2015  02:16:47<span style="letter-spacing:-1.2px">...</span></div><div class="c" style="left:130px;width:127px;border:none;line-height:22px;padding-left:3px;">1mm Colored Stone</div><div class="c" style="left:258px;width:118px;border:none;line-height:22px;padding-left:3px;">Colored Stones</div><div class="c g" style="left:377px;width:68px;border:none;line-height:22px;padding-right:2px;text-align:right;letter-spacing:-0.1px;">13.0000</div><div class="c" style="left:446px;width:48px;border:none;line-height:22px;text-align:center;">Ct</div><div class="c" style="left:495px;width:68px;border:none;line-height:22px;padding-right:3px;text-align:right;letter-spacing:-0.15px;">$0.00</div><div class="c" style="left:564px;width:68px;border:none;line-height:22px;padding-right:3px;text-align:right;letter-spacing:-0.15px;">$15.00</div><div class="c" style="left:633px;width:68px;border:none;line-height:22px;padding-right:3px;text-align:right;letter-spacing:-0.15px;">$0.00</div><div class="c" style="left:702px;width:68px;border:none;line-height:22px;padding-right:3px;text-align:right;letter-spacing:-0.15px;">$195.00</div><div class="c" style="left:771px;width:109px;border:none;line-height:22px;text-align:center;">Received</div><div class="c" style="left:930px;width:68px;border:none;line-height:22px;text-align:center;">JO-000030</div><div class="c" style="left:1068px;width:261px;border:none;line-height:22px;padding-left:3px;">Job item returned to inventory weight</div></div>
<div class="row" style="top:621px;left:0;left:0"><div class="c" style="left:1px;width:129px;"></div><div class="c" style="left:130px;width:128px;"></div><div class="c" style="left:258px;width:119px;"></div><div class="c" style="left:377px;width:69px;"></div><div class="c" style="left:446px;width:49px;"></div><div class="c" style="left:495px;width:69px;"></div><div class="c" style="left:564px;width:69px;"></div><div class="c" style="left:633px;width:69px;"></div><div class="c" style="left:702px;width:69px;"></div><div class="c" style="left:771px;width:110px;"></div><div class="c" style="left:881px;width:49px;"></div><div class="c" style="left:930px;width:69px;"></div><div class="c" style="left:999px;width:69px;"></div><div class="c" style="left:1068px;width:262px;"></div><div class="c" style="left:1px;width:128px;border:none;line-height:22px;text-align:center;">Sep-25-2015  02:16:45<span style="letter-spacing:-1.2px">...</span></div><div class="c" style="left:130px;width:127px;border:none;line-height:22px;padding-left:3px;">Lobster clasp</div><div class="c" style="left:258px;width:118px;border:none;line-height:22px;padding-left:3px;">Clasp</div><div class="c g" style="left:377px;width:68px;border:none;line-height:22px;padding-right:2px;text-align:right;letter-spacing:-0.1px;">1.0000</div><div class="c" style="left:446px;width:48px;border:none;line-height:22px;text-align:center;">pcs</div><div class="c" style="left:495px;width:68px;border:none;line-height:22px;padding-right:3px;text-align:right;letter-spacing:-0.15px;">$1.00</div><div class="c" style="left:564px;width:68px;border:none;line-height:22px;padding-right:3px;text-align:right;letter-spacing:-0.15px;">$3.00</div><div class="c" style="left:633px;width:68px;border:none;line-height:22px;padding-right:3px;text-align:right;letter-spacing:-0.15px;">$1.00</div><div class="c" style="left:702px;width:68px;border:none;line-height:22px;padding-right:3px;text-align:right;letter-spacing:-0.15px;">$3.00</div><div class="c" style="left:771px;width:109px;border:none;line-height:22px;text-align:center;">Received</div><div class="c" style="left:930px;width:68px;border:none;line-height:22px;text-align:center;">JO-000038</div><div class="c" style="left:1068px;width:261px;border:none;line-height:22px;padding-left:3px;">Job item returned to inventory weight</div></div>
</div>
<div class="" style="position:absolute;left:1651px;top:270px;width:18px;height:667px;background:#cddcf3;border-left:1px solid #d9e4f6;"></div>
<svg style="left:1655px;top:925px" width="10" height="6" viewBox="0 0 10 6"><path d="M0.500 0.500 L8.500 0.500 L4.500 5Z" fill="#4a5574"/></svg>
<div class="" style="position:absolute;left:322px;top:937px;width:1329px;height:17px;background:#cddcf3;"></div>
<div class="" style="position:absolute;left:1651px;top:937px;width:18px;height:17px;background:#fff;"></div>
<div class="" style="position:absolute;left:340px;top:938px;width:755px;height:16px;border:1px solid #9db9e4;border-radius:2px;background:linear-gradient(#e4edfb,#d3e1f6 50%,#c9daf3);"></div>
<div class="" style="position:absolute;left:715px;top:942px;width:1px;height:8px;background:#6f8fc4;"></div>
<div class="" style="position:absolute;left:717px;top:942px;width:1px;height:8px;background:#6f8fc4;"></div>
<div class="" style="position:absolute;left:719px;top:942px;width:1px;height:8px;background:#6f8fc4;"></div>
<svg style="left:326px;top:941px" width="6" height="10" viewBox="0 0 6 10"><path d="M5.500 0.500 L5.500 8.500 L1 4.500Z" fill="#4a5574"/></svg>
<svg style="left:1638px;top:941px" width="6" height="10" viewBox="0 0 6 10"><path d="M0.500 0.500 L0.500 8.500 L5 4.500Z" fill="#4a5574"/></svg>
<span class="t " style="left:334.00px;top:960.84px;font-size:12px;line-height:16px;color:#1f4f9c;transform:scaleX(0.8995);transform-origin:left center;">Show</span>
<div class="" style="position:absolute;left:365px;top:959px;width:46px;height:20px;border:1px solid #a9c2e8;background:#fff;"></div>
<span class="t " style="left:367.00px;top:961.69px;font-size:11px;line-height:15px;color:#000;">50</span>
<svg style="left:396px;top:962px" width="10" height="14" viewBox="0 0 10 14"><path d="M2 5.500 L8 5.500 L5 2Z M2 8.500 L8 8.500 L5 12Z" fill="#1b3f7f"/></svg>
<div class="" style="position:absolute;left:395px;top:960px;width:15px;height:18px;background:#e4edfa;z-index:0;"></div>
<svg style="left:396px;top:962px" width="10" height="14" viewBox="0 0 10 14"><path d="M2 5.500 L8 5.500 L5 2Z M2 8.500 L8 8.500 L5 12Z" fill="#1b3f7f"/></svg>
<span class="t " style="left:415.00px;top:960.84px;font-size:12px;line-height:16px;color:#1f4f9c;transform:scaleX(0.9281);transform-origin:left center;">records/page</span>
<div class="" style="position:absolute;left:486px;top:959px;width:47px;height:20px;background:#eeeeee;"></div>
<div class="" style="position:absolute;left:1509px;top:959px;width:112px;height:20px;border:1px solid #b9b9b9;border-right-color:#fff;border-bottom-color:#fff;background:#e9f0fb;"></div>
<span class="t " style="left:1540.74px;top:961.69px;font-size:11px;line-height:15px;color:#111;transform:scaleX(0.9772);transform-origin:center center;">1 - 50 / 80</span>
<svg style="left:1462px;top:959px" width="210" height="20" viewBox="0 0 210 20"><g fill="#d8e6fb" stroke="#2f62b5" stroke-width="1.100" stroke-linejoin="miter"><rect x="3" y="2.500" width="2.500" height="14"/><path d="M17.500 2.500 L17.500 16.500 L5.500 9.500Z"/><path d="M38 2.500 L38 16.500 L24 9.500Z"/><path d="M168.500 2.500 L168.500 16.500 L182.500 9.500Z"/><path d="M188.500 2.500 L188.500 16.500 L200.500 9.500Z"/><rect x="200.500" y="2.500" width="2.500" height="14"/></g></svg>
<div class="" style="position:absolute;left:12px;top:1005px;width:1679px;height:24px;border-right:1px solid #fff;background:linear-gradient(#ffffff 0,#ffffff 1px,#d5e4f9 1px,#c5dbf8 9px,#adcbf3 10px,#b6d1f5 16px,#c9ddf8 24px);"></div>
<div class="" style="position:absolute;left:1619px;top:1008px;width:50px;height:21px;background:#eefaf8;"></div>
<svg style="left:502.5px;top:190px;filter:drop-shadow(4px 4px 3px rgba(0,0,0,0.45))" width="66.5" height="81"><polygon points="20.0,20.0 27.0,61.0 46.5,61.0" fill="rgba(239,228,141,0.93)"/></svg>
<div class="co" style="left:474px;top:249px;width:201.5px;height:35px;background:rgba(239,228,141,0.93)"></div>
<span class="t " style="left:486.30px;top:252.82px;font-size:21.3px;line-height:29px;color:#000;">Inventory by styles</span>
<svg style="left:684.3px;top:370.6px;filter:drop-shadow(4px 4px 3px rgba(0,0,0,0.45))" width="70.30000000000007" height="77.39999999999998"><polygon points="50.3,20.0 20.0,57.4 33.9,57.4" fill="rgba(239,228,141,0.93)"/></svg>
<div class="co" style="left:639.3px;top:426.3px;width:231px;height:32.7px;background:rgba(239,228,141,0.93)"></div>
<span class="t " style="left:649.50px;top:427.42px;font-size:21.3px;line-height:29px;color:#000;transform:scaleX(0.9894);transform-origin:left center;">Exact quantity tracking</span>
<svg style="left:1221.2px;top:525px;filter:drop-shadow(4px 4px 3px rgba(0,0,0,0.45))" width="69.79999999999995" height="73.60000000000002"><polygon points="20.0,20.0 41.1,20.0 49.8,53.6" fill="rgba(224,212,124,0.94)"/></svg>
<div class="co" style="left:1130.2px;top:512.5px;width:248.8px;height:34.5px;background:linear-gradient(rgba(234,222,138,0.94),rgba(214,201,112,0.95))"></div>
<span class="t " style="left:1140.70px;top:515.42px;font-size:21.3px;line-height:29px;color:#000;">Outgoing consignments</span>
<svg style="left:998.5px;top:685px;filter:drop-shadow(4px 4px 3px rgba(0,0,0,0.45))" width="66.0" height="83"><polygon points="46.0,20.0 20.0,63.0 38.5,63.0" fill="rgba(239,228,141,0.93)"/></svg>
<div class="co" style="left:897px;top:746.3px;width:338.5px;height:30.7px;background:rgba(239,228,141,0.93)"></div>
<span class="t " style="left:907.00px;top:746.92px;font-size:21.3px;line-height:29px;color:#000;">Prices based on the market value</span>
<svg style="left:1407px;top:282.2px;filter:drop-shadow(4px 4px 3px rgba(0,0,0,0.45))" width="122.40000000000009" height="79.80000000000001"><polygon points="102.4,20.0 20.0,59.8 58.4,59.8" fill="rgba(239,228,141,0.93)"/></svg>
<div class="co" style="left:1228.7px;top:340.2px;width:291.3px;height:32.8px;background:rgba(239,228,141,0.93)"></div>
<span class="t " style="left:1239.60px;top:343.32px;font-size:21.3px;line-height:29px;color:#000;transform:scaleX(1.0130);transform-origin:left center;">Customize columns to view</span>
<div class="" style="position:absolute;left:1519px;top:237px;width:171px;height:626px;border:1px solid #7593c0;border-right-color:#fcfcfa;background:#f5f5f5;box-shadow:4px 3px 3px rgba(0,0,0,0.38);overflow:hidden;"><div style="position:absolute;left:0;top:0;width:22px;height:624px;background:#e9eef0;border-left:1px solid #fff;"></div><div style="position:absolute;left:0;top:623px;width:170px;height:1px;background:#fff;"></div><div class="cb" style="top:4px"><svg style="left:2px;top:2px" width="10" height="10" viewBox="0 0 10 10"><path d="M1.500 4.800 L3.800 7.500 L8.300 1.800" stroke="#2a62c8" stroke-width="1.900" fill="none"/></svg></div><span class="pi" style="top:4px">Movement date</span><div class="cb" style="top:28px"><svg style="left:2px;top:2px" width="10" height="10" viewBox="0 0 10 10"><path d="M1.500 4.800 L3.800 7.500 L8.300 1.800" stroke="#2a62c8" stroke-width="1.900" fill="none"/></svg></div><span class="pi" style="top:28px">Item type</span><div class="cb" style="top:52px"><svg style="left:2px;top:2px" width="10" height="10" viewBox="0 0 10 10"><path d="M1.500 4.800 L3.800 7.500 L8.300 1.800" stroke="#2a62c8" stroke-width="1.900" fill="none"/></svg></div><span class="pi" style="top:52px">Item group</span><div class="cb" style="top:76px"><svg style="left:2px;top:2px" width="10" height="10" viewBox="0 0 10 10"><path d="M1.500 4.800 L3.800 7.500 L8.300 1.800" stroke="#2a62c8" stroke-width="1.900" fill="none"/></svg></div><span class="pi" style="top:76px">Quantity</span><div class="cb" style="top:100px"><svg style="left:2px;top:2px" width="10" height="10" viewBox="0 0 10 10"><path d="M1.500 4.800 L3.800 7.500 L8.300 1.800" stroke="#2a62c8" stroke-width="1.900" fill="none"/></svg></div><span class="pi" style="top:100px">M.U.</span><div class="cb" style="top:124px"><svg style="left:2px;top:2px" width="10" height="10" viewBox="0 0 10 10"><path d="M1.500 4.800 L3.800 7.500 L8.300 1.800" stroke="#2a62c8" stroke-width="1.900" fill="none"/></svg></div><span class="pi" style="top:124px">Quantity #2</span><span class="pi" style="top:148px">M.U. #2</span><div class="cb" style="top:172px"><svg style="left:2px;top:2px" width="10" height="10" viewBox="0 0 10 10"><path d="M1.500 4.800 L3.800 7.500 L8.300 1.800" stroke="#2a62c8" stroke-width="1.900" fill="none"/></svg></div><span class="pi" style="top:172px">Cost</span><div class="cb" style="top:196px"><svg style="left:2px;top:2px" width="10" height="10" viewBox="0 0 10 10"><path d="M1.500 4.800 L3.800 7.500 L8.300 1.800" stroke="#2a62c8" stroke-width="1.900" fill="none"/></svg></div><span class="pi" style="top:196px">Price</span><div class="cb" style="top:220px"><svg style="left:2px;top:2px" width="10" height="10" viewBox="0 0 10 10"><path d="M1.500 4.800 L3.800 7.500 L8.300 1.800" stroke="#2a62c8" stroke-width="1.900" fill="none"/></svg></div><span class="pi" style="top:220px">Total cost</span><div class="cb" style="top:244px"><svg style="left:2px;top:2px" width="10" height="10" viewBox="0 0 10 10"><path d="M1.500 4.800 L3.800 7.500 L8.300 1.800" stroke="#2a62c8" stroke-width="1.900" fill="none"/></svg></div><span class="pi" style="top:244px">Total price</span><div class="cb" style="top:268px"><svg style="left:2px;top:2px" width="10" height="10" viewBox="0 0 10 10"><path d="M1.500 4.800 L3.800 7.500 L8.300 1.800" stroke="#2a62c8" stroke-width="1.900" fill="none"/></svg></div><span class="pi" style="top:268px">Status</span><span class="pi" style="top:292px">Movement category</span><span class="pi" style="top:316px">Item SKU</span><div class="cb" style="top:340px"><svg style="left:2px;top:2px" width="10" height="10" viewBox="0 0 10 10"><path d="M1.500 4.800 L3.800 7.500 L8.300 1.800" stroke="#2a62c8" stroke-width="1.900" fill="none"/></svg></div><span class="pi" style="top:340px">Item type SKU</span><div class="cb" style="top:364px"><svg style="left:2px;top:2px" width="10" height="10" viewBox="0 0 10 10"><path d="M1.500 4.800 L3.800 7.500 L8.300 1.800" stroke="#2a62c8" stroke-width="1.900" fill="none"/></svg></div><span class="pi" style="top:364px">Description</span><div class="cb" style="top:388px"><svg style="left:2px;top:2px" width="10" height="10" viewBox="0 0 10 10"><path d="M1.500 4.800 L3.800 7.500 L8.300 1.800" stroke="#2a62c8" stroke-width="1.900" fill="none"/></svg></div><span class="pi" style="top:388px">Image</span><div class="cb" style="top:412px"><svg style="left:2px;top:2px" width="10" height="10" viewBox="0 0 10 10"><path d="M1.500 4.800 L3.800 7.500 L8.300 1.800" stroke="#2a62c8" stroke-width="1.900" fill="none"/></svg></div><span class="pi" style="top:412px">Handler User</span><div class="cb" style="top:436px"><svg style="left:2px;top:2px" width="10" height="10" viewBox="0 0 10 10"><path d="M1.500 4.800 L3.800 7.500 L8.300 1.800" stroke="#2a62c8" stroke-width="1.900" fill="none"/></svg></div><span class="pi" style="top:436px">Created by</span><div class="cb" style="top:460px"><svg style="left:2px;top:2px" width="10" height="10" viewBox="0 0 10 10"><path d="M1.500 4.800 L3.800 7.500 L8.300 1.800" stroke="#2a62c8" stroke-width="1.900" fill="none"/></svg></div><span class="pi" style="top:460px">Last update by</span><div class="cb" style="top:484px"><svg style="left:2px;top:2px" width="10" height="10" viewBox="0 0 10 10"><path d="M1.500 4.800 L3.800 7.500 L8.300 1.800" stroke="#2a62c8" stroke-width="1.900" fill="none"/></svg></div><span class="pi" style="top:484px">Ref no.</span><div class="cb" style="top:508px"><svg style="left:2px;top:2px" width="10" height="10" viewBox="0 0 10 10"><path d="M1.500 4.800 L3.800 7.500 L8.300 1.800" stroke="#2a62c8" stroke-width="1.900" fill="none"/></svg></div><span class="pi" style="top:508px">Job status</span><div class="cb" style="top:532px"><svg style="left:2px;top:2px" width="10" height="10" viewBox="0 0 10 10"><path d="M1.500 4.800 L3.800 7.500 L8.300 1.800" stroke="#2a62c8" stroke-width="1.900" fill="none"/></svg></div><span class="pi" style="top:532px">Location</span><div class="cb" style="top:556px"><svg style="left:2px;top:2px" width="10" height="10" viewBox="0 0 10 10"><path d="M1.500 4.800 L3.800 7.500 L8.300 1.800" stroke="#2a62c8" stroke-width="1.900" fill="none"/></svg></div><span class="pi" style="top:556px">Notes</span><span class="pi" style="top:580px">Customer inventory</span><span class="pi" style="top:604px">Vendor</span></div>
<svg style="left:1619px;top:1007px" width="72" height="23" viewBox="1619 1006 72 23"><rect x="1632" y="1015.500" width="21" height="2" fill="#6cc070"/><rect x="1632" y="1015.500" width="21" height="0.700" fill="#a8dca8"/><path d="M1621.500 1011.500 L1630.500 1010 L1631.500 1019.500 L1623.500 1021.500Z" fill="#38a8f0" stroke="#c8d4e8" stroke-width="1.200"/><path d="M1622.300 1012 L1630 1010.700 L1630.300 1014 L1622.800 1016Z" fill="#7cccff" opacity="0.700"/><path d="M1627 1020.500 L1628.500 1024 L1626 1024.500Z" fill="#5058b8"/><ellipse cx="1626.500" cy="1025" rx="5.300" ry="2.300" fill="#d8dcec" stroke="#a8aed0" stroke-width="0.600"/><path d="M1653 1012.500 L1658 1011 L1664 1013.500 L1664 1024 L1659.500 1026 L1653 1022.500Z" fill="#d4d6ee" stroke="#a4a8d4" stroke-width="0.700"/><path d="M1660 1014.500 L1664 1013.500 L1664 1024 L1660 1025.500Z" fill="#8088c8"/><path d="M1653.500 1013 L1658 1011.500 L1663 1013.500 L1659.500 1015Z" fill="#eceef8"/><rect x="1661" y="1023" width="2" height="1" fill="#58c858"/><circle cx="1664.500" cy="1011.500" r="2.600" fill="#ff5a20"/><circle cx="1664.500" cy="1011.500" r="1.200" fill="#ffd040"/><rect x="1681" y="1012" width="2" height="2" fill="#6f98d6"/><rect x="1682" y="1013" width="2" height="2" fill="#fff" opacity="0.900"/><rect x="1677" y="1016" width="2" height="2" fill="#6f98d6"/><rect x="1678" y="1017" width="2" height="2" fill="#fff" opacity="0.900"/><rect x="1681" y="1016" width="2" height="2" fill="#6f98d6"/><rect x="1682" y="1017" width="2" height="2" fill="#fff" opacity="0.900"/><rect x="1673" y="1020" width="2" height="2" fill="#6f98d6"/><rect x="1674" y="1021" width="2" height="2" fill="#fff" opacity="0.900"/><rect x="1677" y="1020" width="2" height="2" fill="#6f98d6"/><rect x="1678" y="1021" width="2" height="2" fill="#fff" opacity="0.900"/><rect x="1681" y="1020" width="2" height="2" fill="#6f98d6"/><rect x="1682" y="1021" width="2" height="2" fill="#fff" opacity="0.900"/></svg>
</body></html>
